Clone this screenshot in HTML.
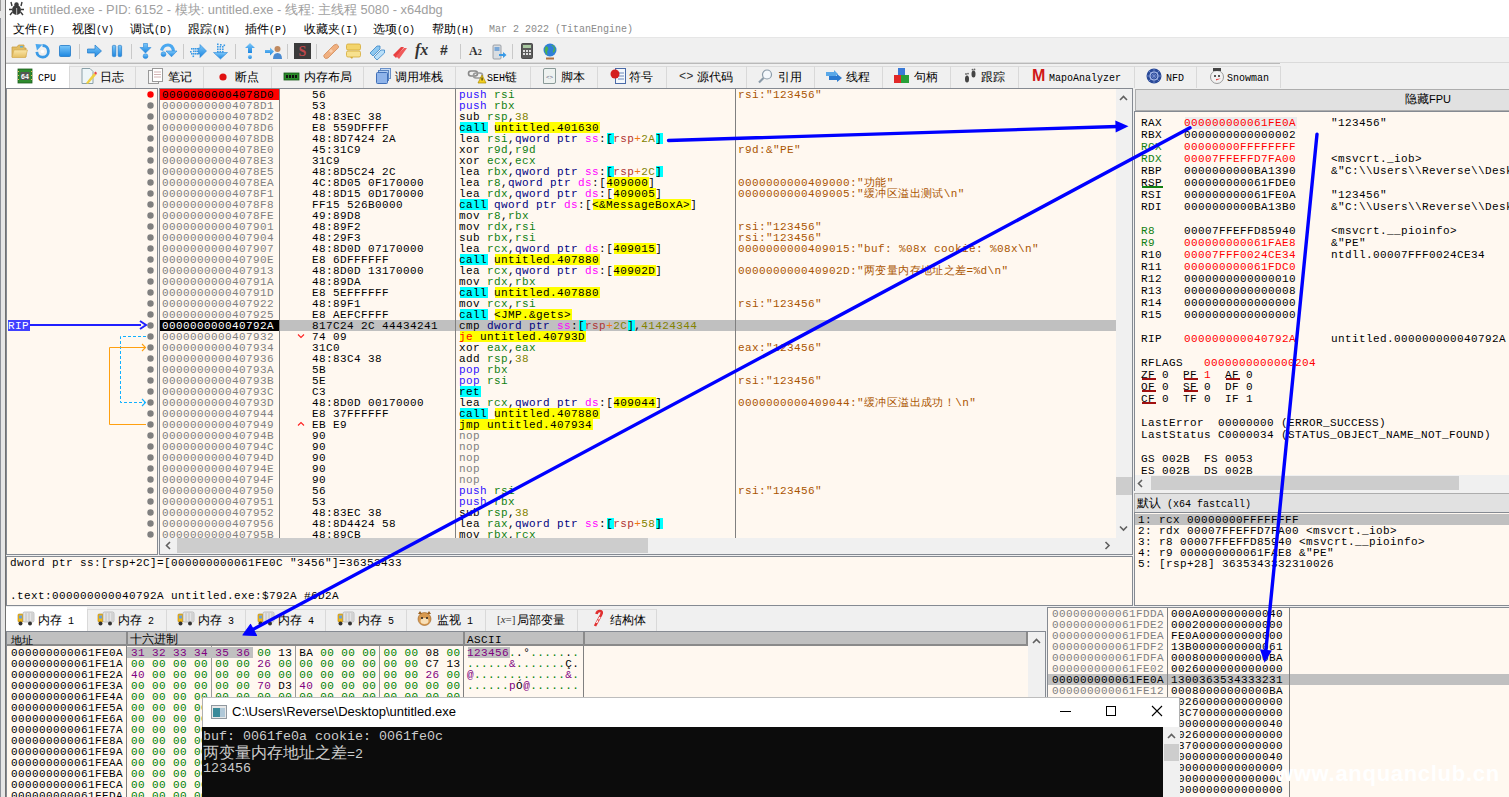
<!DOCTYPE html><html><head><meta charset="utf-8"><style>
html,body{margin:0;padding:0;}
body{width:1509px;height:797px;overflow:hidden;position:relative;background:#f0f0f0;font-family:"Liberation Sans",sans-serif;}
div{position:absolute;box-sizing:border-box;}
.m{font-family:"Liberation Mono",monospace;font-size:11px;letter-spacing:0.4px;line-height:11px;white-space:pre;}
.r{font-family:"Liberation Mono",monospace;font-size:11px;letter-spacing:0.4px;line-height:12px;white-space:pre;}
.s{font-family:"Liberation Sans",sans-serif;font-size:12px;line-height:14px;white-space:pre;color:#000;}
.b{font-family:"Liberation Mono",monospace;font-size:10px;line-height:14px;white-space:pre;color:#000;}
svg{position:absolute;overflow:visible;}
</style></head><body>

<div style="left:0px;top:0px;width:1509px;height:37px;background:#ffffff;"></div>
<div style="left:6px;top:37px;width:1503px;height:1px;background:#e6e6e6;"></div>
<div style="left:6px;top:62px;width:1503px;height:1px;background:#dadada;"></div>
<div style="left:0px;top:0px;width:5px;height:797px;background:#e6e6e6;"></div>
<div style="left:0px;top:0px;width:1px;height:11px;background:#9a9a9a;"></div>
<div style="left:0px;top:18px;width:1px;height:779px;background:#8d9199;"></div>
<div style="left:5px;top:0px;width:1px;height:797px;background:#707070;"></div>
<svg style="left:8px;top:1px" width="17" height="15" viewBox="0 0 17 15"><g fill="#3a3a3a" stroke="#3a3a3a"><ellipse cx="8.5" cy="9" rx="4.5" ry="5" stroke="none"/><circle cx="8.5" cy="3.5" r="2.2" stroke="none"/><path d="M3 1 L4 5 M14 1 L13 5 M1 8.5 L4 8.5 M13 8.5 L16 8.5 M2 14 L4.5 11 M15 14 L12.5 11" stroke-width="1.4" fill="none"/></g><rect x="8" y="7" width="1.2" height="7" fill="#aaa"/></svg>
<div class="s" style="left:29px;top:2px;font-size:12.85px;line-height:16px;color:#a0a0a0">untitled.exe - PID: 6152 - 模块: untitled.exe - 线程: 主线程 5080 - x64dbg</div>
<div class="s" style="left:13px;top:22px;font-size:12px;line-height:14px">文件<span style="font-family:'Liberation Mono';font-size:10px">(F)</span></div>
<div class="s" style="left:72px;top:22px;font-size:12px;line-height:14px">视图<span style="font-family:'Liberation Mono';font-size:10px">(V)</span></div>
<div class="s" style="left:130px;top:22px;font-size:12px;line-height:14px">调试<span style="font-family:'Liberation Mono';font-size:10px">(D)</span></div>
<div class="s" style="left:188px;top:22px;font-size:12px;line-height:14px">跟踪<span style="font-family:'Liberation Mono';font-size:10px">(N)</span></div>
<div class="s" style="left:245px;top:22px;font-size:12px;line-height:14px">插件<span style="font-family:'Liberation Mono';font-size:10px">(P)</span></div>
<div class="s" style="left:304px;top:22px;font-size:12px;line-height:14px">收藏夹<span style="font-family:'Liberation Mono';font-size:10px">(I)</span></div>
<div class="s" style="left:373px;top:22px;font-size:12px;line-height:14px">选项<span style="font-family:'Liberation Mono';font-size:10px">(O)</span></div>
<div class="s" style="left:432px;top:22px;font-size:12px;line-height:14px">帮助<span style="font-family:'Liberation Mono';font-size:10px">(H)</span></div>
<div class="b" style="left:489px;top:23px;color:#8a8a8a">Mar 2 2022 (TitanEngine)</div>
<div style="left:6px;top:63px;width:1503px;height:1px;background:#b9b9b9;"></div>
<div style="left:79px;top:44px;width:1px;height:15px;background:#c9c9c9;"></div>
<div style="left:131px;top:44px;width:1px;height:15px;background:#c9c9c9;"></div>
<div style="left:183px;top:44px;width:1px;height:15px;background:#c9c9c9;"></div>
<div style="left:235px;top:44px;width:1px;height:15px;background:#c9c9c9;"></div>
<div style="left:287px;top:44px;width:1px;height:15px;background:#c9c9c9;"></div>
<div style="left:316px;top:44px;width:1px;height:15px;background:#c9c9c9;"></div>
<div style="left:460px;top:44px;width:1px;height:15px;background:#c9c9c9;"></div>
<div style="left:512px;top:44px;width:1px;height:15px;background:#c9c9c9;"></div>
<svg style="left:0;top:0" width="0" height="0"><defs><linearGradient id="gb" x1="0" y1="0" x2="0" y2="1"><stop offset="0" stop-color="#7cc8fa"/><stop offset="1" stop-color="#1c86e0"/></linearGradient><linearGradient id="gf" x1="0" y1="0" x2="0" y2="1"><stop offset="0" stop-color="#fae6a8"/><stop offset="1" stop-color="#e6bf62"/></linearGradient></defs></svg>
<svg style="left:11px;top:43px" width="17" height="16" viewBox="0 0 17 16"><path d="M1 4 L6 4 L7.5 2 L13 2 L13 5 L15 5 L15 14 L1 14 Z" fill="#e2bd63" stroke="#c9a048" stroke-width="0.8"/><path d="M3 7 L16.5 7 L14.5 14.5 L1 14.5 Z" fill="url(#gf)" stroke="#d4ab50" stroke-width="0.6"/><rect x="9" y="3" width="3" height="1.5" fill="#5ab0e0"/></svg>
<svg style="left:35px;top:43px" width="15" height="16" viewBox="0 0 15 16"><path d="M7.5 2.5 A5.8 5.8 0 1 1 1.8 8.8" fill="none" stroke="#3a9ae6" stroke-width="2.8"/><path d="M0.5 1 L7.5 1.5 L2 7.5 Z" fill="#4aa8f0"/><circle cx="7.5" cy="8.5" r="1.8" fill="#fff"/></svg>
<svg style="left:59px;top:45px" width="12" height="12" viewBox="0 0 12 12"><rect x="0.5" y="0.5" width="11" height="11" rx="1" fill="url(#gb)" stroke="#1f78c8" stroke-width="0.8"/></svg>
<svg style="left:87px;top:44px" width="15" height="14" viewBox="0 0 15 14"><path d="M0.5 5 L8 5 L8 1 L14.5 7 L8 13 L8 9 L0.5 9 Z" fill="url(#gb)" stroke="#1f78c8" stroke-width="0.7" stroke-linejoin="round"/></svg>
<svg style="left:112px;top:45px" width="10" height="12" viewBox="0 0 10 12"><rect x="0.4" y="0.4" width="3.4" height="11.2" rx="1" fill="url(#gb)" stroke="#1f78c8" stroke-width="0.7"/><rect x="6.2" y="0.4" width="3.4" height="11.2" rx="1" fill="url(#gb)" stroke="#1f78c8" stroke-width="0.7"/></svg>
<svg style="left:139px;top:43px" width="13" height="16" viewBox="0 0 13 16"><path d="M4.5 0.5 L8.5 0.5 L8.5 4.5 L12 4.5 L6.5 10 L1 4.5 L4.5 4.5 Z" fill="url(#gb)" stroke="#2a86d8" stroke-width="0.6"/><circle cx="6.5" cy="13.2" r="2.4" fill="url(#gb)" stroke="#2a86d8" stroke-width="0.6"/></svg>
<svg style="left:159px;top:43px" width="19" height="16" viewBox="0 0 19 16"><path d="M2.5 7.5 Q4 2 9 2 Q13.5 2 14.5 8" fill="none" stroke="#4aa8f0" stroke-width="3.2"/><path d="M7 8 L18 8 L12.5 13.8 Z" fill="url(#gb)" stroke="#2a86d8" stroke-width="0.6"/><circle cx="4.5" cy="11.2" r="2.4" fill="url(#gb)" stroke="#2a86d8" stroke-width="0.6"/></svg>
<svg style="left:190px;top:44px" width="17" height="15" viewBox="0 0 17 15"><g fill="#3a9ae6"><rect x="1" y="4" width="1.6" height="1.6"/><rect x="3" y="4" width="1.6" height="1.6"/><rect x="5" y="4" width="1.6" height="1.6"/><rect x="7" y="4" width="1.6" height="1.6"/><rect x="3" y="6.5" width="1.6" height="1.6"/><rect x="5" y="6.5" width="1.6" height="1.6"/><rect x="7" y="6.5" width="1.6" height="1.6"/><rect x="1" y="9" width="1.6" height="1.6"/><rect x="3" y="9" width="1.6" height="1.6"/><rect x="5" y="9" width="1.6" height="1.6"/><rect x="7" y="9" width="1.6" height="1.6"/><rect x="0" y="7" width="1.6" height="1.6"/><rect x="2.5" y="11.5" width="1.6" height="1.6"/></g><path d="M8.5 4 L10 4 L10 0.5 L16.5 7 L10 13.5 L10 10 L8.5 10 Z" fill="url(#gb)" stroke="#2a86d8" stroke-width="0.6"/></svg>
<svg style="left:213px;top:43px" width="15" height="17" viewBox="0 0 15 17"><g fill="#3a9ae6"><rect x="4" y="0.5" width="1.6" height="1.6"/><rect x="7" y="1" width="1.6" height="1.6"/><rect x="4" y="3" width="1.6" height="1.6"/><rect x="6.5" y="3" width="1.6" height="1.6"/><rect x="9" y="3" width="1.6" height="1.6"/><rect x="4" y="5.5" width="1.6" height="1.6"/><rect x="6.5" y="5.5" width="1.6" height="1.6"/><rect x="9" y="5.5" width="1.6" height="1.6"/><rect x="4" y="8" width="1.6" height="1.6"/><rect x="6.5" y="8" width="1.6" height="1.6"/><rect x="9" y="8" width="1.6" height="1.6"/><rect x="10.5" y="1.5" width="1.6" height="1.6"/></g><path d="M3.5 9.5 L11 9.5 L14.5 9.5 L7.5 16 L0.5 9.5 Z" fill="url(#gb)" stroke="#2a86d8" stroke-width="0.6"/></svg>
<svg style="left:244px;top:43px" width="12" height="16" viewBox="0 0 12 16"><path d="M6 0 L11 5 L8 5 L8 10 L4 10 L4 5 L1 5 Z" fill="url(#gb)"/><circle cx="6" cy="14" r="2" fill="url(#gb)"/></svg>
<svg style="left:265px;top:44px" width="17" height="15" viewBox="0 0 17 15"><path d="M0 6 L5 6 L5 3.5 L9 7.5 L5 11.5 L5 9 L0 9 Z" fill="url(#gb)"/><circle cx="12.5" cy="5" r="3" fill="#c08a60"/><path d="M8 15 Q8 9 12.5 9 Q17 9 17 15 Z" fill="#4a8ad0"/></svg>
<svg style="left:294px;top:43px" width="17" height="16" viewBox="0 0 17 16"><rect x="0" y="0" width="17" height="16" fill="#3b3b3b"/><text x="8.5" y="13" font-family="Liberation Serif" font-weight="bold" font-size="14" fill="#c0484c" text-anchor="middle">S</text></svg>
<svg style="left:323px;top:43px" width="16" height="16" viewBox="0 0 16 16"><path d="M2 11 L11 2 Q14 0 15.5 3 Q16 5 14 6 L5 15 Q2 16.5 1 14 Q0 12.5 2 11 Z" fill="#f0b080" stroke="#d08a58" stroke-width="0.8"/><rect x="6.5" y="6.5" width="3" height="3" fill="#f8d0b0" transform="rotate(45 8 8)"/></svg>
<svg style="left:346px;top:43px" width="15" height="16" viewBox="0 0 15 16"><rect x="0.5" y="1" width="14" height="6" rx="1.5" fill="#f3d46b" stroke="#d4a935" stroke-width="0.8"/><rect x="0.5" y="8" width="14" height="6" rx="1.5" fill="#f7e190" stroke="#d4a935" stroke-width="0.8"/><path d="M4 14 L6 16 L7 14 Z" fill="#d4a935"/></svg>
<svg style="left:369px;top:44px" width="17" height="15" viewBox="0 0 17 15"><path d="M1 9 L8 2 L11 2 L11 5 L4 12 Z" fill="#8ec8f0" stroke="#3a86c8" stroke-width="0.8"/><path d="M5 13 L12 6 L15.5 6 L15.5 9 L8 16 Z" fill="#b8def8" stroke="#3a86c8" stroke-width="0.8"/></svg>
<svg style="left:392px;top:44px" width="16" height="15" viewBox="0 0 16 15"><path d="M1 11 L9 3 L12 3 L4 14 Z" fill="#e84040"/><path d="M4 12 L12 4 L15 4 L7 15 Z" fill="#f05a5a"/></svg>
<div style="left:415px;top:40px;font-family:'Liberation Serif';font-style:italic;font-weight:bold;font-size:16px;line-height:20px;color:#333">fx</div>
<div style="left:440px;top:41px;font-family:'Liberation Sans';font-weight:bold;font-size:14px;line-height:18px;color:#333">#</div>
<div style="left:469px;top:43px;font-family:'Liberation Serif';font-weight:bold;font-size:12px;line-height:16px;color:#333">A<span style="font-size:8px">2</span></div>
<svg style="left:492px;top:43px" width="15" height="17" viewBox="0 0 15 17"><rect x="1" y="2" width="8" height="14" rx="1" fill="#d8dde2" stroke="#8a9098" stroke-width="0.8"/><rect x="2.5" y="4" width="5" height="4" fill="#7aa8d8"/><path d="M7 11 L11 11 L11 9 L14.5 12 L11 15 L11 13 L7 13 Z" fill="#3a9ae6"/></svg>
<svg style="left:521px;top:43px" width="12" height="16" viewBox="0 0 12 16"><rect x="0.5" y="0.5" width="11" height="15" rx="1" fill="#5a5a5a" stroke="#333" stroke-width="0.8"/><rect x="2" y="2" width="8" height="3" fill="#a8c8a0"/><g fill="#ddd"><rect x="2" y="7" width="2" height="2"/><rect x="5" y="7" width="2" height="2"/><rect x="8" y="7" width="2" height="2"/><rect x="2" y="10" width="2" height="2"/><rect x="5" y="10" width="2" height="2"/><rect x="8" y="10" width="2" height="2"/></g></svg>
<svg style="left:542px;top:43px" width="16" height="17" viewBox="0 0 16 17"><circle cx="8" cy="7" r="6.5" fill="#2f7fd8"/><path d="M4 3 Q7 4 6 7 Q4 9 6 12 L4 11 Q2 8 3 5 Z M9 2 Q12 3 12 6 Q10 8 11 10 L13 8 Q14 4 11 2 Z" fill="#4cb050"/><path d="M4 15.5 L12 15.5" stroke="#b07040" stroke-width="2"/></svg>
<div style="left:1280px;top:63px;width:229px;height:25px;background:#f0f0f0;"></div>
<div style="left:6px;top:64px;width:63px;height:24px;background:#ffffff;"></div>
<div style="left:69px;top:66px;width:66px;height:1px;background:#dcdcdc;"></div>
<div style="left:69px;top:67px;width:66px;height:21px;background:#f0f0f0;"></div>
<div style="left:69px;top:66px;width:1px;height:22px;background:#d9d9d9;"></div>
<div style="left:135px;top:66px;width:68px;height:1px;background:#dcdcdc;"></div>
<div style="left:135px;top:67px;width:68px;height:21px;background:#f0f0f0;"></div>
<div style="left:135px;top:66px;width:1px;height:22px;background:#d9d9d9;"></div>
<div style="left:203px;top:66px;width:68px;height:1px;background:#dcdcdc;"></div>
<div style="left:203px;top:67px;width:68px;height:21px;background:#f0f0f0;"></div>
<div style="left:203px;top:66px;width:1px;height:22px;background:#d9d9d9;"></div>
<div style="left:271px;top:66px;width:92px;height:1px;background:#dcdcdc;"></div>
<div style="left:271px;top:67px;width:92px;height:21px;background:#f0f0f0;"></div>
<div style="left:271px;top:66px;width:1px;height:22px;background:#d9d9d9;"></div>
<div style="left:363px;top:66px;width:92px;height:1px;background:#dcdcdc;"></div>
<div style="left:363px;top:67px;width:92px;height:21px;background:#f0f0f0;"></div>
<div style="left:363px;top:66px;width:1px;height:22px;background:#d9d9d9;"></div>
<div style="left:455px;top:66px;width:75px;height:1px;background:#dcdcdc;"></div>
<div style="left:455px;top:67px;width:75px;height:21px;background:#f0f0f0;"></div>
<div style="left:455px;top:66px;width:1px;height:22px;background:#d9d9d9;"></div>
<div style="left:530px;top:66px;width:67px;height:1px;background:#dcdcdc;"></div>
<div style="left:530px;top:67px;width:67px;height:21px;background:#f0f0f0;"></div>
<div style="left:530px;top:66px;width:1px;height:22px;background:#d9d9d9;"></div>
<div style="left:597px;top:66px;width:69px;height:1px;background:#dcdcdc;"></div>
<div style="left:597px;top:67px;width:69px;height:21px;background:#f0f0f0;"></div>
<div style="left:597px;top:66px;width:1px;height:22px;background:#d9d9d9;"></div>
<div style="left:666px;top:66px;width:80px;height:1px;background:#dcdcdc;"></div>
<div style="left:666px;top:67px;width:80px;height:21px;background:#f0f0f0;"></div>
<div style="left:666px;top:66px;width:1px;height:22px;background:#d9d9d9;"></div>
<div style="left:746px;top:66px;width:68px;height:1px;background:#dcdcdc;"></div>
<div style="left:746px;top:67px;width:68px;height:21px;background:#f0f0f0;"></div>
<div style="left:746px;top:66px;width:1px;height:22px;background:#d9d9d9;"></div>
<div style="left:814px;top:66px;width:68px;height:1px;background:#dcdcdc;"></div>
<div style="left:814px;top:67px;width:68px;height:21px;background:#f0f0f0;"></div>
<div style="left:814px;top:66px;width:1px;height:22px;background:#d9d9d9;"></div>
<div style="left:882px;top:66px;width:68px;height:1px;background:#dcdcdc;"></div>
<div style="left:882px;top:67px;width:68px;height:21px;background:#f0f0f0;"></div>
<div style="left:882px;top:66px;width:1px;height:22px;background:#d9d9d9;"></div>
<div style="left:950px;top:66px;width:68px;height:1px;background:#dcdcdc;"></div>
<div style="left:950px;top:67px;width:68px;height:21px;background:#f0f0f0;"></div>
<div style="left:950px;top:66px;width:1px;height:22px;background:#d9d9d9;"></div>
<div style="left:1018px;top:66px;width:116px;height:1px;background:#dcdcdc;"></div>
<div style="left:1018px;top:67px;width:116px;height:21px;background:#f0f0f0;"></div>
<div style="left:1018px;top:66px;width:1px;height:22px;background:#d9d9d9;"></div>
<div style="left:1134px;top:66px;width:62px;height:1px;background:#dcdcdc;"></div>
<div style="left:1134px;top:67px;width:62px;height:21px;background:#f0f0f0;"></div>
<div style="left:1134px;top:66px;width:1px;height:22px;background:#d9d9d9;"></div>
<div style="left:1196px;top:66px;width:84px;height:1px;background:#dcdcdc;"></div>
<div style="left:1196px;top:67px;width:84px;height:21px;background:#f0f0f0;"></div>
<div style="left:1196px;top:66px;width:1px;height:22px;background:#d9d9d9;"></div>
<div style="left:1280px;top:66px;width:1px;height:22px;background:#d9d9d9;"></div>
<svg style="left:18px;top:69px" width="14" height="14" viewBox="0 0 14 14"><rect x="0" y="0" width="14" height="14" fill="#2e8b2e" stroke="#1c5e1c" stroke-width="0.8"/><rect x="2.5" y="3" width="9" height="8" fill="#555"/><text x="7" y="10" font-size="7" font-family="Liberation Sans" font-weight="bold" fill="#fff" text-anchor="middle">64</text><g fill="#e8c050"><rect x="0" y="2" width="1" height="1"/><rect x="0" y="6" width="1" height="1"/><rect x="0" y="10" width="1" height="1"/><rect x="13" y="2" width="1" height="1"/><rect x="13" y="6" width="1" height="1"/><rect x="13" y="10" width="1" height="1"/></g></svg>
<div class="s" style="left:38px;top:70px"><span style="font-family:'Liberation Mono';font-size:10px">CPU</span></div>
<svg style="left:81px;top:68px" width="16" height="16" viewBox="0 0 16 16"><path d="M1 0.5 L9 0.5 L12 3.5 L12 15.5 L1 15.5 Z" fill="#eef6f8" stroke="#8aa0a8"/><path d="M5 15 L13 5 L15 7 L7 16 Z" fill="#f0d040"/><path d="M13 5 L14.5 3.5 L16 5 L15 7Z" fill="#e84848"/></svg>
<div class="s" style="left:100px;top:70px">日志</div>
<svg style="left:148px;top:68px" width="15" height="16" viewBox="0 0 15 16"><rect x="0.5" y="2.5" width="10" height="13" fill="#f6f6f6" stroke="#999"/><rect x="4.5" y="0.5" width="10" height="13" fill="#fff" stroke="#999"/><g stroke="#c8a0a0" stroke-width="0.8"><path d="M6 4 L13 4 M6 6.5 L13 6.5 M6 9 L13 9"/></g></svg>
<div class="s" style="left:168px;top:70px">笔记</div>
<svg style="left:219px;top:73px" width="8" height="8" viewBox="0 0 8 8"><circle cx="4" cy="4" r="3.6" fill="#e01010"/></svg>
<div class="s" style="left:235px;top:70px">断点</div>
<svg style="left:284px;top:73px" width="15" height="8" viewBox="0 0 15 8"><rect x="0" y="0" width="15" height="7" fill="#2a8a2a" stroke="#145814" stroke-width="0.8"/><g fill="#111"><rect x="2" y="2" width="2" height="3"/><rect x="5" y="2" width="2" height="3"/><rect x="8" y="2" width="2" height="3"/><rect x="11" y="2" width="2" height="3"/></g></svg>
<div class="s" style="left:304px;top:70px">内存布局</div>
<svg style="left:376px;top:68px" width="15" height="16" viewBox="0 0 15 16"><rect x="4.5" y="0.5" width="10" height="10" fill="#c8dcf4" stroke="#6a90c8"/><rect x="2.5" y="2.5" width="10" height="10" fill="#b0ccf0" stroke="#5a84c0"/><rect x="0.5" y="4.5" width="11" height="11" rx="1" fill="#8fb4ea" stroke="#3f6fb8"/></svg>
<div class="s" style="left:395px;top:70px">调用堆栈</div>
<svg style="left:468px;top:69px" width="19" height="14" viewBox="0 0 19 14"><rect x="0.5" y="2" width="9" height="5" rx="2.5" fill="none" stroke="#888" stroke-width="1.6"/><rect x="5.5" y="4" width="9" height="5" rx="2.5" fill="none" stroke="#999" stroke-width="1.6"/><path d="M10 14 L14 6 L18 14 Z" fill="#f5d020" stroke="#a88a00" stroke-width="0.7"/><rect x="13.6" y="8.5" width="0.9" height="3" fill="#000"/></svg>
<div class="s" style="left:487px;top:70px"><span style="font-family:'Liberation Mono';font-size:10px">SEH</span>链</div>
<svg style="left:543px;top:68px" width="13" height="16" viewBox="0 0 13 16"><path d="M2 0.5 L12.5 0.5 L12.5 14 Q12.5 15.5 11 15.5 L0.5 15.5 L0.5 2 Q0.5 0.5 2 0.5 Z" fill="#eef2f0" stroke="#8a9a98"/><text x="6.5" y="11" font-size="6" font-family="Liberation Mono" fill="#557" text-anchor="middle">&lt;&gt;</text></svg>
<div class="s" style="left:561px;top:70px">脚本</div>
<svg style="left:610px;top:68px" width="16" height="16" viewBox="0 0 16 16"><rect x="5.5" y="0.5" width="10" height="15" fill="#f4f8fc" stroke="#4a6aa8"/><g stroke="#4a6aa8" stroke-width="0.8"><path d="M8 5 L14 5 M8 8 L14 8 M8 11 L14 11"/></g><circle cx="5" cy="6" r="4.5" fill="#d42020"/></svg>
<div class="s" style="left:629px;top:70px">符号</div>
<div class="b" style="left:679px;top:69px;font-size:12px;line-height:16px;color:#333">&lt;&gt;</div>
<div class="s" style="left:697px;top:70px">源代码</div>
<svg style="left:758px;top:69px" width="15" height="15" viewBox="0 0 15 15"><circle cx="9" cy="5.5" r="4.5" fill="#f4f8fc" stroke="#8a9aa8" stroke-width="1.2"/><path d="M5.5 9 L1 13.5" stroke="#8a9aa8" stroke-width="2.2"/></svg>
<div class="s" style="left:778px;top:70px">引用</div>
<svg style="left:826px;top:70px" width="17" height="12" viewBox="0 0 17 12"><path d="M0 2 L8 2 L8 0 L12 4 L8 8 L8 6 L0 6 Z" fill="#5aa8e8"/><path d="M3 6 L11 6 L11 4 L16 8 L11 12 L11 10 L3 10 Z" fill="#2a7ad0"/></svg>
<div class="s" style="left:846px;top:70px">线程</div>
<svg style="left:894px;top:68px" width="15" height="16" viewBox="0 0 15 16"><rect x="4" y="0" width="7" height="7" fill="#3a7ad8"/><rect x="0" y="7" width="7" height="8" fill="#e02828"/><rect x="7" y="7" width="8" height="8" fill="#28a038"/></svg>
<div class="s" style="left:914px;top:70px">句柄</div>
<svg style="left:964px;top:69px" width="13" height="15" viewBox="0 0 13 15"><ellipse cx="3" cy="10" rx="2" ry="3.5" fill="#444"/><ellipse cx="9.5" cy="5" rx="2" ry="3.5" fill="#444"/><g fill="#666"><circle cx="2" cy="5" r="0.9"/><circle cx="4" cy="4.6" r="0.9"/><circle cx="8.5" cy="0.6" r="0.9"/><circle cx="10.5" cy="0.4" r="0.9"/></g></svg>
<div class="s" style="left:981px;top:70px">跟踪</div>
<div style="left:1032px;top:66px;font-family:'Liberation Sans';font-weight:bold;font-size:16px;line-height:20px;color:#d01818">M</div>
<div class="s" style="left:1049px;top:70px"><span style="font-family:'Liberation Mono';font-size:10px">MapoAnalyzer</span></div>
<svg style="left:1146px;top:68px" width="16" height="16" viewBox="0 0 16 16"><circle cx="8" cy="8" r="7.5" fill="#2a4a98"/><circle cx="8" cy="8" r="4" fill="none" stroke="#b8c8f0" stroke-width="1.2"/><path d="M8 1 L8 15 M1 8 L15 8 M3 3 L13 13 M13 3 L3 13" stroke="#7890d0" stroke-width="0.8"/></svg>
<div class="s" style="left:1166px;top:70px"><span style="font-family:'Liberation Mono';font-size:10px">NFD</span></div>
<svg style="left:1209px;top:68px" width="16" height="16" viewBox="0 0 16 16"><circle cx="8" cy="9" r="6.5" fill="#f2f2f2" stroke="#9a9a9a"/><circle cx="6" cy="8" r="1" fill="#222"/><circle cx="10" cy="8" r="1" fill="#222"/><path d="M7 11 L12 10.5 L7 12.5Z" fill="#e04040"/><rect x="4" y="0" width="8" height="3" fill="#444"/></svg>
<div class="s" style="left:1227px;top:70px"><span style="font-family:'Liberation Mono';font-size:10px">Snowman</span></div>
<div style="left:6px;top:88px;width:152px;height:467px;background:#858a92;"></div>
<div style="left:7px;top:89px;width:150px;height:465px;background:#fff8f0;"></div>
<div style="left:159px;top:88px;width:974px;height:467px;background:#858a92;"></div>
<div style="left:160px;top:89px;width:972px;height:465px;background:#fff8f0;"></div>
<div style="left:158px;top:88px;width:1px;height:467px;background:#f0f0f0;"></div>
<div style="left:1116px;top:89px;width:16px;height:449px;background:#f0f0f0;"></div>
<div style="left:1116px;top:477px;width:16px;height:18px;background:#cdcdcd;"></div>
<div style="left:160px;top:538px;width:956px;height:16px;background:#f0f0f0;"></div>
<div style="left:177px;top:538px;width:471px;height:15px;background:#cdcdcd;"></div>
<div style="left:1116px;top:538px;width:16px;height:16px;background:#f0f0f0;"></div>
<svg style="left:1119px;top:95px" width="9" height="9" viewBox="0 0 9 9"><path d="M1 5 L4.5 1.5 L8 5" fill="none" stroke="#606060" stroke-width="1.6"/></svg>
<svg style="left:1119px;top:525px" width="9" height="9" viewBox="0 0 9 9"><path d="M1 1.5 L4.5 5 L8 1.5" fill="none" stroke="#606060" stroke-width="1.6"/></svg>
<svg style="left:165px;top:541px" width="9" height="9" viewBox="0 0 9 9"><path d="M5 1 L1.5 4.5 L5 8" fill="none" stroke="#606060" stroke-width="1.6"/></svg>
<svg style="left:1104px;top:541px" width="9" height="9" viewBox="0 0 9 9"><path d="M1.5 1 L5 4.5 L1.5 8" fill="none" stroke="#606060" stroke-width="1.6"/></svg>
<div style="left:160px;top:89px;width:956px;height:449px;overflow:hidden">
<div style="left:0px;top:0px;width:119px;height:11px;background:#ff0000;"></div>
<div class="m" style="left:2px;top:1px;"><span style="color:#000000">00000000004078D0</span></div>
<div class="m" style="left:152px;top:1px;"><span style="color:#000">56</span></div>
<div class="m" style="left:299px;top:1px;"><span style="color:#3010ff">push</span> <span style="color:#108010">rsi</span></div>
<div class="m" style="left:578px;top:1px;"><span style="color:#aa5500">rsi:"123456"</span></div>
<div class="m" style="left:2px;top:12px;"><span style="color:#808080">00000000004078D1</span></div>
<div class="m" style="left:152px;top:12px;"><span style="color:#000">53</span></div>
<div class="m" style="left:299px;top:12px;"><span style="color:#3010ff">push</span> <span style="color:#108010">rbx</span></div>
<div class="m" style="left:2px;top:23px;"><span style="color:#808080">00000000004078D2</span></div>
<div class="m" style="left:152px;top:23px;"><span style="color:#000">48:83EC 38</span></div>
<div class="m" style="left:299px;top:23px;"><span style="color:#000">sub</span> <span style="color:#108010">rsp</span><span style="color:#000">,</span><span style="color:#828200">38</span></div>
<div class="m" style="left:2px;top:34px;"><span style="color:#808080">00000000004078D6</span></div>
<div class="m" style="left:152px;top:34px;"><span style="color:#000">E8 559DFFFF</span></div>
<div style="left:300px;top:33px;width:28px;height:11px;background:#00ffff;"></div>
<div style="left:335px;top:33px;width:105px;height:11px;background:#ffff00;"></div>
<div class="m" style="left:299px;top:34px;"><span style="color:#000">call</span> <span style="color:#000">untitled.401630</span></div>
<div class="m" style="left:2px;top:45px;"><span style="color:#808080">00000000004078DB</span></div>
<div class="m" style="left:152px;top:45px;"><span style="color:#000">48:8D7424 2A</span></div>
<div style="left:447px;top:44px;width:7px;height:11px;background:#00ffff;"></div>
<div style="left:496px;top:44px;width:7px;height:11px;background:#00ffff;"></div>
<div class="m" style="left:299px;top:45px;"><span style="color:#000">lea</span> <span style="color:#108010">rsi</span><span style="color:#000">,</span><span style="color:#000080">qword ptr</span> <span style="color:#ff00ff">ss</span><span style="color:#000">:</span><span style="color:#000">[</span><span style="color:#b03434">rsp</span><span style="color:#f27711">+</span><span style="color:#828200">2A</span><span style="color:#000">]</span></div>
<div class="m" style="left:2px;top:56px;"><span style="color:#808080">00000000004078E0</span></div>
<div class="m" style="left:152px;top:56px;"><span style="color:#000">45:31C9</span></div>
<div class="m" style="left:299px;top:56px;"><span style="color:#000">xor</span> <span style="color:#108010">r9d</span><span style="color:#000">,</span><span style="color:#108010">r9d</span></div>
<div class="m" style="left:578px;top:56px;"><span style="color:#aa5500">r9d:&amp;"PE"</span></div>
<div class="m" style="left:2px;top:67px;"><span style="color:#808080">00000000004078E3</span></div>
<div class="m" style="left:152px;top:67px;"><span style="color:#000">31C9</span></div>
<div class="m" style="left:299px;top:67px;"><span style="color:#000">xor</span> <span style="color:#108010">ecx</span><span style="color:#000">,</span><span style="color:#108010">ecx</span></div>
<div class="m" style="left:2px;top:78px;"><span style="color:#808080">00000000004078E5</span></div>
<div class="m" style="left:152px;top:78px;"><span style="color:#000">48:8D5C24 2C</span></div>
<div style="left:447px;top:77px;width:7px;height:11px;background:#00ffff;"></div>
<div style="left:496px;top:77px;width:7px;height:11px;background:#00ffff;"></div>
<div class="m" style="left:299px;top:78px;"><span style="color:#000">lea</span> <span style="color:#108010">rbx</span><span style="color:#000">,</span><span style="color:#000080">qword ptr</span> <span style="color:#ff00ff">ss</span><span style="color:#000">:</span><span style="color:#000">[</span><span style="color:#b03434">rsp</span><span style="color:#f27711">+</span><span style="color:#828200">2C</span><span style="color:#000">]</span></div>
<div class="m" style="left:2px;top:89px;"><span style="color:#808080">00000000004078EA</span></div>
<div class="m" style="left:152px;top:89px;"><span style="color:#000">4C:8D05 0F170000</span></div>
<div style="left:447px;top:88px;width:42px;height:11px;background:#ffff00;"></div>
<div class="m" style="left:299px;top:89px;"><span style="color:#000">lea</span> <span style="color:#108010">r8</span><span style="color:#000">,</span><span style="color:#000080">qword ptr</span> <span style="color:#ff00ff">ds</span><span style="color:#000">:</span><span style="color:#000">[</span><span style="color:#000">409000</span><span style="color:#000">]</span></div>
<div class="m" style="left:578px;top:89px;"><span style="color:#aa5500">0000000000409000:"功能"</span></div>
<div class="m" style="left:2px;top:100px;"><span style="color:#808080">00000000004078F1</span></div>
<div class="m" style="left:152px;top:100px;"><span style="color:#000">48:8D15 0D170000</span></div>
<div style="left:454px;top:99px;width:42px;height:11px;background:#ffff00;"></div>
<div class="m" style="left:299px;top:100px;"><span style="color:#000">lea</span> <span style="color:#108010">rdx</span><span style="color:#000">,</span><span style="color:#000080">qword ptr</span> <span style="color:#ff00ff">ds</span><span style="color:#000">:</span><span style="color:#000">[</span><span style="color:#000">409005</span><span style="color:#000">]</span></div>
<div class="m" style="left:578px;top:100px;"><span style="color:#aa5500">0000000000409005:"缓冲区溢出测试\n"</span></div>
<div class="m" style="left:2px;top:111px;"><span style="color:#808080">00000000004078F8</span></div>
<div class="m" style="left:152px;top:111px;"><span style="color:#000">FF15 526B0000</span></div>
<div style="left:300px;top:110px;width:28px;height:11px;background:#00ffff;"></div>
<div style="left:433px;top:110px;width:98px;height:11px;background:#ffff00;"></div>
<div class="m" style="left:299px;top:111px;"><span style="color:#000">call</span> <span style="color:#000080">qword ptr</span> <span style="color:#ff00ff">ds</span><span style="color:#000">:</span><span style="color:#000">[</span><span style="color:#000">&lt;&amp;MessageBoxA&gt;</span><span style="color:#000">]</span></div>
<div class="m" style="left:2px;top:122px;"><span style="color:#808080">00000000004078FE</span></div>
<div class="m" style="left:152px;top:122px;"><span style="color:#000">49:89D8</span></div>
<div class="m" style="left:299px;top:122px;"><span style="color:#000">mov</span> <span style="color:#108010">r8</span><span style="color:#000">,</span><span style="color:#108010">rbx</span></div>
<div class="m" style="left:2px;top:133px;"><span style="color:#808080">0000000000407901</span></div>
<div class="m" style="left:152px;top:133px;"><span style="color:#000">48:89F2</span></div>
<div class="m" style="left:299px;top:133px;"><span style="color:#000">mov</span> <span style="color:#108010">rdx</span><span style="color:#000">,</span><span style="color:#108010">rsi</span></div>
<div class="m" style="left:578px;top:133px;"><span style="color:#aa5500">rsi:"123456"</span></div>
<div class="m" style="left:2px;top:144px;"><span style="color:#808080">0000000000407904</span></div>
<div class="m" style="left:152px;top:144px;"><span style="color:#000">48:29F3</span></div>
<div class="m" style="left:299px;top:144px;"><span style="color:#000">sub</span> <span style="color:#108010">rbx</span><span style="color:#000">,</span><span style="color:#108010">rsi</span></div>
<div class="m" style="left:578px;top:144px;"><span style="color:#aa5500">rsi:"123456"</span></div>
<div class="m" style="left:2px;top:155px;"><span style="color:#808080">0000000000407907</span></div>
<div class="m" style="left:152px;top:155px;"><span style="color:#000">48:8D0D 07170000</span></div>
<div style="left:454px;top:154px;width:42px;height:11px;background:#ffff00;"></div>
<div class="m" style="left:299px;top:155px;"><span style="color:#000">lea</span> <span style="color:#108010">rcx</span><span style="color:#000">,</span><span style="color:#000080">qword ptr</span> <span style="color:#ff00ff">ds</span><span style="color:#000">:</span><span style="color:#000">[</span><span style="color:#000">409015</span><span style="color:#000">]</span></div>
<div class="m" style="left:578px;top:155px;"><span style="color:#aa5500">0000000000409015:"buf: %08x cookie: %08x\n"</span></div>
<div class="m" style="left:2px;top:166px;"><span style="color:#808080">000000000040790E</span></div>
<div class="m" style="left:152px;top:166px;"><span style="color:#000">E8 6DFFFFFF</span></div>
<div style="left:300px;top:165px;width:28px;height:11px;background:#00ffff;"></div>
<div style="left:335px;top:165px;width:105px;height:11px;background:#ffff00;"></div>
<div class="m" style="left:299px;top:166px;"><span style="color:#000">call</span> <span style="color:#000">untitled.407880</span></div>
<div class="m" style="left:2px;top:177px;"><span style="color:#808080">0000000000407913</span></div>
<div class="m" style="left:152px;top:177px;"><span style="color:#000">48:8D0D 13170000</span></div>
<div style="left:454px;top:176px;width:42px;height:11px;background:#ffff00;"></div>
<div class="m" style="left:299px;top:177px;"><span style="color:#000">lea</span> <span style="color:#108010">rcx</span><span style="color:#000">,</span><span style="color:#000080">qword ptr</span> <span style="color:#ff00ff">ds</span><span style="color:#000">:</span><span style="color:#000">[</span><span style="color:#000">40902D</span><span style="color:#000">]</span></div>
<div class="m" style="left:578px;top:177px;"><span style="color:#aa5500">000000000040902D:"两变量内存地址之差=%d\n"</span></div>
<div class="m" style="left:2px;top:188px;"><span style="color:#808080">000000000040791A</span></div>
<div class="m" style="left:152px;top:188px;"><span style="color:#000">48:89DA</span></div>
<div class="m" style="left:299px;top:188px;"><span style="color:#000">mov</span> <span style="color:#108010">rdx</span><span style="color:#000">,</span><span style="color:#108010">rbx</span></div>
<div class="m" style="left:2px;top:199px;"><span style="color:#808080">000000000040791D</span></div>
<div class="m" style="left:152px;top:199px;"><span style="color:#000">E8 5EFFFFFF</span></div>
<div style="left:300px;top:198px;width:28px;height:11px;background:#00ffff;"></div>
<div style="left:335px;top:198px;width:105px;height:11px;background:#ffff00;"></div>
<div class="m" style="left:299px;top:199px;"><span style="color:#000">call</span> <span style="color:#000">untitled.407880</span></div>
<div class="m" style="left:2px;top:210px;"><span style="color:#808080">0000000000407922</span></div>
<div class="m" style="left:152px;top:210px;"><span style="color:#000">48:89F1</span></div>
<div class="m" style="left:299px;top:210px;"><span style="color:#000">mov</span> <span style="color:#108010">rcx</span><span style="color:#000">,</span><span style="color:#108010">rsi</span></div>
<div class="m" style="left:578px;top:210px;"><span style="color:#aa5500">rsi:"123456"</span></div>
<div class="m" style="left:2px;top:221px;"><span style="color:#808080">0000000000407925</span></div>
<div class="m" style="left:152px;top:221px;"><span style="color:#000">E8 AEFCFFFF</span></div>
<div style="left:300px;top:220px;width:28px;height:11px;background:#00ffff;"></div>
<div style="left:335px;top:220px;width:77px;height:11px;background:#ffff00;"></div>
<div class="m" style="left:299px;top:221px;"><span style="color:#000">call</span> <span style="color:#000">&lt;JMP.&amp;gets&gt;</span></div>
<div style="left:119px;top:231px;width:837px;height:11px;background:#c0c0c0;"></div>
<div style="left:0px;top:231px;width:119px;height:11px;background:#000000;"></div>
<div class="m" style="left:2px;top:232px;"><span style="color:#ffffff">000000000040792A</span></div>
<div class="m" style="left:152px;top:232px;"><span style="color:#000">817C24 2C 44434241</span></div>
<div style="left:419px;top:231px;width:7px;height:11px;background:#00ffff;"></div>
<div style="left:468px;top:231px;width:7px;height:11px;background:#00ffff;"></div>
<div class="m" style="left:299px;top:232px;"><span style="color:#000">cmp</span> <span style="color:#000080">dword ptr</span> <span style="color:#ff00ff">ss</span><span style="color:#000">:</span><span style="color:#000">[</span><span style="color:#b03434">rsp</span><span style="color:#f27711">+</span><span style="color:#828200">2C</span><span style="color:#000">]</span><span style="color:#000">,</span><span style="color:#828200">41424344</span></div>
<div class="m" style="left:2px;top:243px;"><span style="color:#808080">0000000000407932</span></div>
<div class="m" style="left:152px;top:243px;"><span style="color:#000">74 09</span></div>
<div style="left:300px;top:242px;width:14px;height:11px;background:#ffff00;"></div>
<div style="left:314px;top:242px;width:7px;height:11px;background:#ffff00;"></div>
<div style="left:321px;top:242px;width:105px;height:11px;background:#ffff00;"></div>
<div class="m" style="left:299px;top:243px;"><span style="color:#ff0000">je</span> <span style="color:#000">untitled.40793D</span></div>
<div class="m" style="left:2px;top:254px;"><span style="color:#808080">0000000000407934</span></div>
<div class="m" style="left:152px;top:254px;"><span style="color:#000">31C0</span></div>
<div class="m" style="left:299px;top:254px;"><span style="color:#000">xor</span> <span style="color:#108010">eax</span><span style="color:#000">,</span><span style="color:#108010">eax</span></div>
<div class="m" style="left:578px;top:254px;"><span style="color:#aa5500">eax:"123456"</span></div>
<div class="m" style="left:2px;top:265px;"><span style="color:#808080">0000000000407936</span></div>
<div class="m" style="left:152px;top:265px;"><span style="color:#000">48:83C4 38</span></div>
<div class="m" style="left:299px;top:265px;"><span style="color:#000">add</span> <span style="color:#108010">rsp</span><span style="color:#000">,</span><span style="color:#828200">38</span></div>
<div class="m" style="left:2px;top:276px;"><span style="color:#808080">000000000040793A</span></div>
<div class="m" style="left:152px;top:276px;"><span style="color:#000">5B</span></div>
<div class="m" style="left:299px;top:276px;"><span style="color:#3010ff">pop</span> <span style="color:#108010">rbx</span></div>
<div class="m" style="left:2px;top:287px;"><span style="color:#808080">000000000040793B</span></div>
<div class="m" style="left:152px;top:287px;"><span style="color:#000">5E</span></div>
<div class="m" style="left:299px;top:287px;"><span style="color:#3010ff">pop</span> <span style="color:#108010">rsi</span></div>
<div class="m" style="left:578px;top:287px;"><span style="color:#aa5500">rsi:"123456"</span></div>
<div class="m" style="left:2px;top:298px;"><span style="color:#808080">000000000040793C</span></div>
<div class="m" style="left:152px;top:298px;"><span style="color:#000">C3</span></div>
<div style="left:300px;top:297px;width:21px;height:11px;background:#00ffff;"></div>
<div class="m" style="left:299px;top:298px;"><span style="color:#000">ret</span></div>
<div class="m" style="left:2px;top:309px;"><span style="color:#808080">000000000040793D</span></div>
<div class="m" style="left:152px;top:309px;"><span style="color:#000">48:8D0D 00170000</span></div>
<div style="left:454px;top:308px;width:42px;height:11px;background:#ffff00;"></div>
<div class="m" style="left:299px;top:309px;"><span style="color:#000">lea</span> <span style="color:#108010">rcx</span><span style="color:#000">,</span><span style="color:#000080">qword ptr</span> <span style="color:#ff00ff">ds</span><span style="color:#000">:</span><span style="color:#000">[</span><span style="color:#000">409044</span><span style="color:#000">]</span></div>
<div class="m" style="left:578px;top:309px;"><span style="color:#aa5500">0000000000409044:"缓冲区溢出成功！\n"</span></div>
<div class="m" style="left:2px;top:320px;"><span style="color:#808080">0000000000407944</span></div>
<div class="m" style="left:152px;top:320px;"><span style="color:#000">E8 37FFFFFF</span></div>
<div style="left:300px;top:319px;width:28px;height:11px;background:#00ffff;"></div>
<div style="left:335px;top:319px;width:105px;height:11px;background:#ffff00;"></div>
<div class="m" style="left:299px;top:320px;"><span style="color:#000">call</span> <span style="color:#000">untitled.407880</span></div>
<div class="m" style="left:2px;top:331px;"><span style="color:#808080">0000000000407949</span></div>
<div class="m" style="left:152px;top:331px;"><span style="color:#000">EB E9</span></div>
<div style="left:300px;top:330px;width:21px;height:11px;background:#ffff00;"></div>
<div style="left:321px;top:330px;width:7px;height:11px;background:#ffff00;"></div>
<div style="left:328px;top:330px;width:105px;height:11px;background:#ffff00;"></div>
<div class="m" style="left:299px;top:331px;"><span style="color:#000">jmp</span> <span style="color:#000">untitled.407934</span></div>
<div class="m" style="left:2px;top:342px;"><span style="color:#808080">000000000040794B</span></div>
<div class="m" style="left:152px;top:342px;"><span style="color:#000">90</span></div>
<div class="m" style="left:299px;top:342px;"><span style="color:#808080">nop</span></div>
<div class="m" style="left:2px;top:353px;"><span style="color:#808080">000000000040794C</span></div>
<div class="m" style="left:152px;top:353px;"><span style="color:#000">90</span></div>
<div class="m" style="left:299px;top:353px;"><span style="color:#808080">nop</span></div>
<div class="m" style="left:2px;top:364px;"><span style="color:#808080">000000000040794D</span></div>
<div class="m" style="left:152px;top:364px;"><span style="color:#000">90</span></div>
<div class="m" style="left:299px;top:364px;"><span style="color:#808080">nop</span></div>
<div class="m" style="left:2px;top:375px;"><span style="color:#808080">000000000040794E</span></div>
<div class="m" style="left:152px;top:375px;"><span style="color:#000">90</span></div>
<div class="m" style="left:299px;top:375px;"><span style="color:#808080">nop</span></div>
<div class="m" style="left:2px;top:386px;"><span style="color:#808080">000000000040794F</span></div>
<div class="m" style="left:152px;top:386px;"><span style="color:#000">90</span></div>
<div class="m" style="left:299px;top:386px;"><span style="color:#808080">nop</span></div>
<div class="m" style="left:2px;top:397px;"><span style="color:#808080">0000000000407950</span></div>
<div class="m" style="left:152px;top:397px;"><span style="color:#000">56</span></div>
<div class="m" style="left:299px;top:397px;"><span style="color:#3010ff">push</span> <span style="color:#108010">rsi</span></div>
<div class="m" style="left:578px;top:397px;"><span style="color:#aa5500">rsi:"123456"</span></div>
<div class="m" style="left:2px;top:408px;"><span style="color:#808080">0000000000407951</span></div>
<div class="m" style="left:152px;top:408px;"><span style="color:#000">53</span></div>
<div class="m" style="left:299px;top:408px;"><span style="color:#3010ff">push</span> <span style="color:#108010">rbx</span></div>
<div class="m" style="left:2px;top:419px;"><span style="color:#808080">0000000000407952</span></div>
<div class="m" style="left:152px;top:419px;"><span style="color:#000">48:83EC 38</span></div>
<div class="m" style="left:299px;top:419px;"><span style="color:#000">sub</span> <span style="color:#108010">rsp</span><span style="color:#000">,</span><span style="color:#828200">38</span></div>
<div class="m" style="left:2px;top:430px;"><span style="color:#808080">0000000000407956</span></div>
<div class="m" style="left:152px;top:430px;"><span style="color:#000">48:8D4424 58</span></div>
<div style="left:447px;top:429px;width:7px;height:11px;background:#00ffff;"></div>
<div style="left:496px;top:429px;width:7px;height:11px;background:#00ffff;"></div>
<div class="m" style="left:299px;top:430px;"><span style="color:#000">lea</span> <span style="color:#108010">rax</span><span style="color:#000">,</span><span style="color:#000080">qword ptr</span> <span style="color:#ff00ff">ss</span><span style="color:#000">:</span><span style="color:#000">[</span><span style="color:#b03434">rsp</span><span style="color:#f27711">+</span><span style="color:#828200">58</span><span style="color:#000">]</span></div>
<div class="m" style="left:2px;top:441px;"><span style="color:#808080">000000000040795B</span></div>
<div class="m" style="left:152px;top:441px;"><span style="color:#000">48:89CB</span></div>
<div class="m" style="left:299px;top:441px;"><span style="color:#000">mov</span> <span style="color:#108010">rbx</span><span style="color:#000">,</span><span style="color:#108010">rcx</span></div>
<div style="left:119px;top:0px;width:1px;height:449px;background:#808080;"></div>
<div style="left:295px;top:0px;width:1px;height:449px;background:#808080;"></div>
<div style="left:575px;top:0px;width:1px;height:449px;background:#808080;"></div>
</div>
<div style="left:279px;top:89px;width:1px;height:0px;background:#808080;"></div>
<div style="left:7px;top:89px;width:150px;height:465px;overflow:hidden">
<svg style="left:140px;top:2px" width="7" height="7"><circle cx="3.5" cy="3.5" r="3.2" fill="#ff0000"/></svg>
<svg style="left:140px;top:13px" width="7" height="7"><circle cx="3.5" cy="3.5" r="3.2" fill="#808080"/></svg>
<svg style="left:140px;top:24px" width="7" height="7"><circle cx="3.5" cy="3.5" r="3.2" fill="#808080"/></svg>
<svg style="left:140px;top:35px" width="7" height="7"><circle cx="3.5" cy="3.5" r="3.2" fill="#808080"/></svg>
<svg style="left:140px;top:46px" width="7" height="7"><circle cx="3.5" cy="3.5" r="3.2" fill="#808080"/></svg>
<svg style="left:140px;top:57px" width="7" height="7"><circle cx="3.5" cy="3.5" r="3.2" fill="#808080"/></svg>
<svg style="left:140px;top:68px" width="7" height="7"><circle cx="3.5" cy="3.5" r="3.2" fill="#808080"/></svg>
<svg style="left:140px;top:79px" width="7" height="7"><circle cx="3.5" cy="3.5" r="3.2" fill="#808080"/></svg>
<svg style="left:140px;top:90px" width="7" height="7"><circle cx="3.5" cy="3.5" r="3.2" fill="#808080"/></svg>
<svg style="left:140px;top:101px" width="7" height="7"><circle cx="3.5" cy="3.5" r="3.2" fill="#808080"/></svg>
<svg style="left:140px;top:112px" width="7" height="7"><circle cx="3.5" cy="3.5" r="3.2" fill="#808080"/></svg>
<svg style="left:140px;top:123px" width="7" height="7"><circle cx="3.5" cy="3.5" r="3.2" fill="#808080"/></svg>
<svg style="left:140px;top:134px" width="7" height="7"><circle cx="3.5" cy="3.5" r="3.2" fill="#808080"/></svg>
<svg style="left:140px;top:145px" width="7" height="7"><circle cx="3.5" cy="3.5" r="3.2" fill="#808080"/></svg>
<svg style="left:140px;top:156px" width="7" height="7"><circle cx="3.5" cy="3.5" r="3.2" fill="#808080"/></svg>
<svg style="left:140px;top:167px" width="7" height="7"><circle cx="3.5" cy="3.5" r="3.2" fill="#808080"/></svg>
<svg style="left:140px;top:178px" width="7" height="7"><circle cx="3.5" cy="3.5" r="3.2" fill="#808080"/></svg>
<svg style="left:140px;top:189px" width="7" height="7"><circle cx="3.5" cy="3.5" r="3.2" fill="#808080"/></svg>
<svg style="left:140px;top:200px" width="7" height="7"><circle cx="3.5" cy="3.5" r="3.2" fill="#808080"/></svg>
<svg style="left:140px;top:211px" width="7" height="7"><circle cx="3.5" cy="3.5" r="3.2" fill="#808080"/></svg>
<svg style="left:140px;top:222px" width="7" height="7"><circle cx="3.5" cy="3.5" r="3.2" fill="#808080"/></svg>
<svg style="left:140px;top:233px" width="7" height="7"><circle cx="3.5" cy="3.5" r="3.2" fill="#808080"/></svg>
<svg style="left:140px;top:244px" width="7" height="7"><circle cx="3.5" cy="3.5" r="3.2" fill="#808080"/></svg>
<svg style="left:140px;top:255px" width="7" height="7"><circle cx="3.5" cy="3.5" r="3.2" fill="#808080"/></svg>
<svg style="left:140px;top:266px" width="7" height="7"><circle cx="3.5" cy="3.5" r="3.2" fill="#808080"/></svg>
<svg style="left:140px;top:277px" width="7" height="7"><circle cx="3.5" cy="3.5" r="3.2" fill="#808080"/></svg>
<svg style="left:140px;top:288px" width="7" height="7"><circle cx="3.5" cy="3.5" r="3.2" fill="#808080"/></svg>
<svg style="left:140px;top:299px" width="7" height="7"><circle cx="3.5" cy="3.5" r="3.2" fill="#808080"/></svg>
<svg style="left:140px;top:310px" width="7" height="7"><circle cx="3.5" cy="3.5" r="3.2" fill="#808080"/></svg>
<svg style="left:140px;top:321px" width="7" height="7"><circle cx="3.5" cy="3.5" r="3.2" fill="#808080"/></svg>
<svg style="left:140px;top:332px" width="7" height="7"><circle cx="3.5" cy="3.5" r="3.2" fill="#808080"/></svg>
<svg style="left:140px;top:343px" width="7" height="7"><circle cx="3.5" cy="3.5" r="3.2" fill="#808080"/></svg>
<svg style="left:140px;top:354px" width="7" height="7"><circle cx="3.5" cy="3.5" r="3.2" fill="#808080"/></svg>
<svg style="left:140px;top:365px" width="7" height="7"><circle cx="3.5" cy="3.5" r="3.2" fill="#808080"/></svg>
<svg style="left:140px;top:376px" width="7" height="7"><circle cx="3.5" cy="3.5" r="3.2" fill="#808080"/></svg>
<svg style="left:140px;top:387px" width="7" height="7"><circle cx="3.5" cy="3.5" r="3.2" fill="#808080"/></svg>
<svg style="left:140px;top:398px" width="7" height="7"><circle cx="3.5" cy="3.5" r="3.2" fill="#808080"/></svg>
<svg style="left:140px;top:409px" width="7" height="7"><circle cx="3.5" cy="3.5" r="3.2" fill="#808080"/></svg>
<svg style="left:140px;top:420px" width="7" height="7"><circle cx="3.5" cy="3.5" r="3.2" fill="#808080"/></svg>
<svg style="left:140px;top:431px" width="7" height="7"><circle cx="3.5" cy="3.5" r="3.2" fill="#808080"/></svg>
<svg style="left:140px;top:442px" width="7" height="7"><circle cx="3.5" cy="3.5" r="3.2" fill="#808080"/></svg>
</div>
<div style="left:8px;top:320px;width:22px;height:11px;background:#4040ff;"></div>
<div class="m" style="left:8px;top:321px;color:#ffffff;">RIP</div>
<div style="left:30px;top:324px;width:111px;height:2px;background:#2020ff;"></div>
<svg style="left:138px;top:320px" width="10" height="10" viewBox="0 0 10 10"><path d="M2 1 L8 5 L2 9" fill="none" stroke="#2020ff" stroke-width="2"/></svg>
<svg style="left:118px;top:334px" width="32" height="72" viewBox="0 0 32 72"><path d="M28 2.5 L2.5 2.5 L2.5 68.5 L27 68.5" fill="none" stroke="#10b0ff" stroke-width="1" stroke-dasharray="3,2"/><path d="M24 65 L27.5 68.5 L24 72" fill="none" stroke="#10b0ff" stroke-width="1.1"/></svg>
<svg style="left:108px;top:344px" width="42" height="84" viewBox="0 0 42 84"><path d="M38 80.5 L1.5 80.5 L1.5 3.5 L37 3.5" fill="none" stroke="#ffa010" stroke-width="1"/><path d="M34 0 L37.5 3.5 L34 7" fill="none" stroke="#ffa010" stroke-width="1.1"/></svg>
<svg style="left:297px;top:333px" width="8" height="6" viewBox="0 0 8 6"><path d="M1 1.5 L4 4.5 L7 1.5" fill="none" stroke="#ff2020" stroke-width="1.1"/></svg>
<svg style="left:297px;top:421px" width="8" height="6" viewBox="0 0 8 6"><path d="M1 4.5 L4 1.5 L7 4.5" fill="none" stroke="#ff2020" stroke-width="1.1"/></svg>
<div style="left:1132px;top:88px;width:377px;height:519px;background:#f0f0f0;"></div>
<div style="left:1132px;top:88px;width:1px;height:519px;background:#858a92;"></div>
<div style="left:1135px;top:89px;width:374px;height:22px;background:#adadad;"></div>
<div style="left:1136px;top:90px;width:373px;height:20px;background:#e1e1e1;"></div>
<div class="s" style="left:1405px;top:92px">隐藏<span style="font-family:'Liberation Sans';font-size:11px">FPU</span></div>
<div style="left:1134px;top:111px;width:375px;height:364px;background:#858a92;"></div>
<div style="left:1135px;top:112px;width:374px;height:363px;background:#fff8f0;"></div>
<div style="left:1134px;top:475px;width:375px;height:16px;background:#f0f0f0;"></div>
<div style="left:1134px;top:475px;width:1px;height:16px;background:#858a92;"></div>
<div style="left:1151px;top:476px;width:308px;height:14px;background:#cdcdcd;"></div>
<svg style="left:1137px;top:479px" width="9" height="9" viewBox="0 0 9 9"><path d="M5 1 L1.5 4.5 L5 8" fill="none" stroke="#606060" stroke-width="1.6"/></svg>
<div style="left:1135px;top:112px;width:374px;height:363px;overflow:hidden">
<div style="left:50px;top:5px;width:112px;height:12px;background:#ebebeb;"></div>
<div class="r" style="left:6px;top:5px;color:#000">RAX</div>
<div class="r" style="left:49px;top:5px;color:#ff0000">000000000061FE0A</div>
<div class="r" style="left:196px;top:5px;color:#000">"123456"</div>
<div class="r" style="left:6px;top:17px;color:#000">RBX</div>
<div class="r" style="left:49px;top:17px;color:#000">0000000000000002</div>
<div class="r" style="left:6px;top:29px;color:#108010">RCX</div>
<div class="r" style="left:49px;top:29px;color:#ff0000">00000000FFFFFFFF</div>
<div class="r" style="left:6px;top:41px;color:#108010">RDX</div>
<div class="r" style="left:49px;top:41px;color:#ff0000">00007FFEFFD7FA00</div>
<div class="r" style="left:196px;top:41px;color:#000">&lt;msvcrt._iob&gt;</div>
<div class="r" style="left:6px;top:53px;color:#000">RBP</div>
<div class="r" style="left:49px;top:53px;color:#000">0000000000BA1390</div>
<div class="r" style="left:196px;top:53px;color:#000">&amp;"C:\\Users\\Reverse\\Desktop\\untitled.exe"</div>
<div class="r" style="left:6px;top:65px;color:#000">RSP</div>
<div class="r" style="left:49px;top:65px;color:#000">000000000061FDE0</div>
<div class="r" style="left:6px;top:77px;color:#000">RSI</div>
<div class="r" style="left:49px;top:77px;color:#000">000000000061FE0A</div>
<div class="r" style="left:196px;top:77px;color:#000">"123456"</div>
<div class="r" style="left:6px;top:89px;color:#000">RDI</div>
<div class="r" style="left:49px;top:89px;color:#000">0000000000BA13B0</div>
<div class="r" style="left:196px;top:89px;color:#000">&amp;"C:\\Users\\Reverse\\Desktop\\untitled.exe"</div>
<div class="r" style="left:6px;top:113px;color:#108010">R8</div>
<div class="r" style="left:49px;top:113px;color:#000">00007FFEFFD85940</div>
<div class="r" style="left:196px;top:113px;color:#000">&lt;msvcrt.__pioinfo&gt;</div>
<div class="r" style="left:6px;top:125px;color:#108010">R9</div>
<div class="r" style="left:49px;top:125px;color:#ff0000">000000000061FAE8</div>
<div class="r" style="left:196px;top:125px;color:#000">&amp;"PE"</div>
<div class="r" style="left:6px;top:137px;color:#000">R10</div>
<div class="r" style="left:49px;top:137px;color:#ff0000">00007FFF0024CE34</div>
<div class="r" style="left:196px;top:137px;color:#000">ntdll.00007FFF0024CE34</div>
<div class="r" style="left:6px;top:149px;color:#000">R11</div>
<div class="r" style="left:49px;top:149px;color:#ff0000">000000000061FDC0</div>
<div class="r" style="left:6px;top:161px;color:#000">R12</div>
<div class="r" style="left:49px;top:161px;color:#000">0000000000000010</div>
<div class="r" style="left:6px;top:173px;color:#000">R13</div>
<div class="r" style="left:49px;top:173px;color:#000">0000000000000008</div>
<div class="r" style="left:6px;top:185px;color:#000">R14</div>
<div class="r" style="left:49px;top:185px;color:#000">0000000000000000</div>
<div class="r" style="left:6px;top:197px;color:#000">R15</div>
<div class="r" style="left:49px;top:197px;color:#000">0000000000000000</div>
<div class="r" style="left:6px;top:221px;color:#000">RIP</div>
<div class="r" style="left:49px;top:221px;color:#ff0000">000000000040792A</div>
<div class="r" style="left:196px;top:221px;color:#000">untitled.000000000040792A</div>
<div style="left:7px;top:74px;width:21px;height:2px;background:#108010;"></div>
<div class="r" style="left:6px;top:245px">RFLAGS</div>
<div class="r" style="left:69px;top:245px;color:#ff0000">0000000000000204</div>
<div class="r" style="left:6px;top:257px">ZF</div>
<div class="r" style="left:27px;top:257px;color:#000">0</div>
<div style="left:7px;top:266px;width:14px;height:2px;background:#a01010;"></div>
<div class="r" style="left:48px;top:257px">PF</div>
<div class="r" style="left:69px;top:257px;color:#ff0000">1</div>
<div style="left:49px;top:266px;width:14px;height:2px;background:#a01010;"></div>
<div class="r" style="left:90px;top:257px">AF</div>
<div class="r" style="left:111px;top:257px;color:#000">0</div>
<div style="left:91px;top:266px;width:14px;height:2px;background:#a01010;"></div>
<div class="r" style="left:6px;top:269px">OF</div>
<div class="r" style="left:27px;top:269px;color:#000">0</div>
<div style="left:7px;top:278px;width:14px;height:2px;background:#a01010;"></div>
<div class="r" style="left:48px;top:269px">SF</div>
<div class="r" style="left:69px;top:269px;color:#000">0</div>
<div style="left:49px;top:278px;width:14px;height:2px;background:#a01010;"></div>
<div class="r" style="left:90px;top:269px">DF</div>
<div class="r" style="left:111px;top:269px;color:#000">0</div>
<div class="r" style="left:6px;top:281px">CF</div>
<div class="r" style="left:27px;top:281px;color:#000">0</div>
<div style="left:7px;top:290px;width:14px;height:2px;background:#a01010;"></div>
<div class="r" style="left:48px;top:281px">TF</div>
<div class="r" style="left:69px;top:281px;color:#000">0</div>
<div class="r" style="left:90px;top:281px">IF</div>
<div class="r" style="left:111px;top:281px;color:#000">1</div>
<div class="r" style="left:6px;top:305px">LastError  00000000 (ERROR_SUCCESS)</div>
<div class="r" style="left:6px;top:317px">LastStatus C0000034 (STATUS_OBJECT_NAME_NOT_FOUND)</div>
<div class="r" style="left:6px;top:341px">GS 002B  FS 0053</div>
<div class="r" style="left:6px;top:353px">ES 002B  DS 002B</div>
</div>
<div style="left:1134px;top:491px;width:375px;height:2px;background:#f0f0f0;"></div>
<div style="left:1134px;top:493px;width:375px;height:20px;background:#adadad;"></div>
<div style="left:1135px;top:494px;width:374px;height:18px;background:#e1e1e1;"></div>
<div class="s" style="left:1137px;top:496px">默认<span style="font-family:'Liberation Mono';font-size:10px"> (x64 fastcall)</span></div>
<div style="left:1134px;top:512px;width:375px;height:94px;background:#858a92;"></div>
<div style="left:1135px;top:513px;width:374px;height:92px;background:#fff8f0;"></div>
<div style="left:1135px;top:514px;width:374px;height:11px;background:#c0c0c0;"></div>
<div class="m" style="left:1138px;top:515px;color:#000;">1: rcx 00000000FFFFFFFF</div>
<div class="m" style="left:1138px;top:526px;color:#000;">2: rdx 00007FFEFFD7FA00 &lt;msvcrt._iob&gt;</div>
<div class="m" style="left:1138px;top:537px;color:#000;">3: r8 00007FFEFFD85940 &lt;msvcrt.__pioinfo&gt;</div>
<div class="m" style="left:1138px;top:548px;color:#000;">4: r9 000000000061FAE8 &amp;"PE"</div>
<div class="m" style="left:1138px;top:559px;color:#000;">5: [rsp+28] 3635343332310026</div>
<div style="left:6px;top:555px;width:1127px;height:1px;background:#f0f0f0;"></div>
<div style="left:6px;top:556px;width:1127px;height:50px;background:#858a92;"></div>
<div style="left:7px;top:557px;width:1125px;height:48px;background:#fff8f0;"></div>
<div class="m" style="left:10px;top:558px;color:#000;">dword ptr ss:[rsp+2C]=[000000000061FE0C "3456"]=36353433</div>
<div class="m" style="left:10px;top:591px;color:#000;">.text:000000000040792A untitled.exe:$792A #6D2A</div>
<div style="left:6px;top:606px;width:1041px;height:25px;background:#f0f0f0;"></div>
<div style="left:6px;top:607px;width:81px;height:24px;background:#ffffff;"></div>
<div class="s" style="left:38px;top:613px">内存<span style="font-family:'Liberation Mono';font-size:10px"> 1</span></div>
<svg style="left:18px;top:611px" width="16" height="15" viewBox="0 0 16 15"><rect x="0" y="3" width="5" height="8" rx="1" fill="#f2b818" stroke="#b08010" stroke-width="0.6"/><rect x="1" y="4.5" width="3" height="3" fill="#6aa0d8"/><rect x="5" y="1" width="11" height="10" rx="1.5" fill="#e4e4e4" stroke="#a0a0a0" stroke-width="0.6"/><g stroke="#b8b8b8" stroke-width="0.8"><path d="M8 2 L8 10 M11 2 L11 10 M14 2 L14 10"/></g><circle cx="2.5" cy="12.5" r="2" fill="#333"/><circle cx="12" cy="12.5" r="2" fill="#333"/></svg>
<div style="left:87px;top:609px;width:79px;height:1px;background:#dcdcdc;"></div>
<div style="left:87px;top:609px;width:1px;height:22px;background:#d9d9d9;"></div>
<div class="s" style="left:118px;top:613px">内存<span style="font-family:'Liberation Mono';font-size:10px"> 2</span></div>
<svg style="left:98px;top:611px" width="16" height="15" viewBox="0 0 16 15"><rect x="0" y="3" width="5" height="8" rx="1" fill="#f2b818" stroke="#b08010" stroke-width="0.6"/><rect x="1" y="4.5" width="3" height="3" fill="#6aa0d8"/><rect x="5" y="1" width="11" height="10" rx="1.5" fill="#e4e4e4" stroke="#a0a0a0" stroke-width="0.6"/><g stroke="#b8b8b8" stroke-width="0.8"><path d="M8 2 L8 10 M11 2 L11 10 M14 2 L14 10"/></g><circle cx="2.5" cy="12.5" r="2" fill="#333"/><circle cx="12" cy="12.5" r="2" fill="#333"/></svg>
<div style="left:166px;top:609px;width:79px;height:1px;background:#dcdcdc;"></div>
<div style="left:166px;top:609px;width:1px;height:22px;background:#d9d9d9;"></div>
<div class="s" style="left:198px;top:613px">内存<span style="font-family:'Liberation Mono';font-size:10px"> 3</span></div>
<svg style="left:178px;top:611px" width="16" height="15" viewBox="0 0 16 15"><rect x="0" y="3" width="5" height="8" rx="1" fill="#f2b818" stroke="#b08010" stroke-width="0.6"/><rect x="1" y="4.5" width="3" height="3" fill="#6aa0d8"/><rect x="5" y="1" width="11" height="10" rx="1.5" fill="#e4e4e4" stroke="#a0a0a0" stroke-width="0.6"/><g stroke="#b8b8b8" stroke-width="0.8"><path d="M8 2 L8 10 M11 2 L11 10 M14 2 L14 10"/></g><circle cx="2.5" cy="12.5" r="2" fill="#333"/><circle cx="12" cy="12.5" r="2" fill="#333"/></svg>
<div style="left:245px;top:609px;width:80px;height:1px;background:#dcdcdc;"></div>
<div style="left:245px;top:609px;width:1px;height:22px;background:#d9d9d9;"></div>
<div class="s" style="left:278px;top:613px">内存<span style="font-family:'Liberation Mono';font-size:10px"> 4</span></div>
<svg style="left:258px;top:611px" width="16" height="15" viewBox="0 0 16 15"><rect x="0" y="3" width="5" height="8" rx="1" fill="#f2b818" stroke="#b08010" stroke-width="0.6"/><rect x="1" y="4.5" width="3" height="3" fill="#6aa0d8"/><rect x="5" y="1" width="11" height="10" rx="1.5" fill="#e4e4e4" stroke="#a0a0a0" stroke-width="0.6"/><g stroke="#b8b8b8" stroke-width="0.8"><path d="M8 2 L8 10 M11 2 L11 10 M14 2 L14 10"/></g><circle cx="2.5" cy="12.5" r="2" fill="#333"/><circle cx="12" cy="12.5" r="2" fill="#333"/></svg>
<div style="left:325px;top:609px;width:81px;height:1px;background:#dcdcdc;"></div>
<div style="left:325px;top:609px;width:1px;height:22px;background:#d9d9d9;"></div>
<div class="s" style="left:358px;top:613px">内存<span style="font-family:'Liberation Mono';font-size:10px"> 5</span></div>
<svg style="left:338px;top:611px" width="16" height="15" viewBox="0 0 16 15"><rect x="0" y="3" width="5" height="8" rx="1" fill="#f2b818" stroke="#b08010" stroke-width="0.6"/><rect x="1" y="4.5" width="3" height="3" fill="#6aa0d8"/><rect x="5" y="1" width="11" height="10" rx="1.5" fill="#e4e4e4" stroke="#a0a0a0" stroke-width="0.6"/><g stroke="#b8b8b8" stroke-width="0.8"><path d="M8 2 L8 10 M11 2 L11 10 M14 2 L14 10"/></g><circle cx="2.5" cy="12.5" r="2" fill="#333"/><circle cx="12" cy="12.5" r="2" fill="#333"/></svg>
<div style="left:406px;top:609px;width:79px;height:1px;background:#dcdcdc;"></div>
<div style="left:406px;top:609px;width:1px;height:22px;background:#d9d9d9;"></div>
<div class="s" style="left:437px;top:613px">监视<span style="font-family:'Liberation Mono';font-size:10px"> 1</span></div>
<svg style="left:417px;top:611px" width="15" height="15" viewBox="0 0 15 15"><circle cx="7.5" cy="8" r="6.5" fill="#d89a50" stroke="#9a6020" stroke-width="0.6"/><ellipse cx="7.5" cy="10" rx="4" ry="3" fill="#f8e0b8"/><circle cx="5" cy="7" r="1" fill="#222"/><circle cx="10" cy="7" r="1" fill="#222"/><path d="M1 3 L3 0 L5 3 M10 3 L12 0 L14 3" fill="#9a6020"/></svg>
<div style="left:485px;top:609px;width:92px;height:1px;background:#dcdcdc;"></div>
<div style="left:485px;top:609px;width:1px;height:22px;background:#d9d9d9;"></div>
<div class="s" style="left:517px;top:613px">局部变量<span style="font-family:'Liberation Mono';font-size:10px"></span></div>
<div style="left:497px;top:612px;font-family:'Liberation Serif';font-size:11px;line-height:14px;color:#333">[<i>x</i>=]</div>
<div style="left:577px;top:609px;width:79px;height:1px;background:#dcdcdc;"></div>
<div style="left:577px;top:609px;width:1px;height:22px;background:#d9d9d9;"></div>
<div class="s" style="left:610px;top:613px">结构体<span style="font-family:'Liberation Mono';font-size:10px"></span></div>
<svg style="left:592px;top:610px" width="14" height="17" viewBox="0 0 14 17"><path d="M3 16 L9 5 Q11 1 8 1 Q5 1 4.5 4" fill="none" stroke="#e03030" stroke-width="2.6"/><path d="M4.5 13 L6 10.5 M6.5 9.5 L8 7" stroke="#fff" stroke-width="1.4"/></svg>
<div style="left:656px;top:609px;width:1px;height:22px;background:#d9d9d9;"></div>
<div style="left:6px;top:631px;width:1040px;height:166px;background:#858a92;"></div>
<div style="left:7px;top:632px;width:1038px;height:165px;background:#fff8f0;"></div>
<div style="left:7px;top:632px;width:1021px;height:14px;background:#c0c0c0;"></div>
<div style="left:7px;top:644px;width:1021px;height:2px;background:#8a8a8a;"></div>
<div style="left:126px;top:632px;width:2px;height:14px;background:#8a8a8a;"></div>
<div style="left:463px;top:632px;width:2px;height:14px;background:#8a8a8a;"></div>
<div style="left:583px;top:632px;width:2px;height:14px;background:#8a8a8a;"></div>
<div style="left:1026px;top:632px;width:2px;height:14px;background:#8a8a8a;"></div>
<div class="s" style="left:11px;top:634px;font-size:11px;line-height:12px">地址</div>
<div class="s" style="left:130px;top:633px;font-size:12px;line-height:13px">十六进制</div>
<div class="m" style="left:467px;top:635px;color:#000;">ASCII</div>
<div style="left:1028px;top:632px;width:17px;height:165px;background:#f0f0f0;"></div>
<svg style="left:1032px;top:638px" width="9" height="9" viewBox="0 0 9 9"><path d="M1 5 L4.5 1.5 L8 5" fill="none" stroke="#606060" stroke-width="1.6"/></svg>
<div style="left:126px;top:646px;width:1px;height:151px;background:#808080;"></div>
<div style="left:463px;top:646px;width:1px;height:151px;background:#808080;"></div>
<div style="left:583px;top:646px;width:1px;height:151px;background:#808080;"></div>
<div style="left:211px;top:646px;width:1px;height:151px;background:#9a9a9a;"></div>
<div style="left:295px;top:646px;width:1px;height:151px;background:#9a9a9a;"></div>
<div style="left:379px;top:646px;width:1px;height:151px;background:#9a9a9a;"></div>
<div style="left:127px;top:647px;width:126px;height:11px;background:#c0c0c0;"></div>
<div style="left:468px;top:647px;width:42px;height:11px;background:#c0c0c0;"></div>
<div class="m" style="left:11px;top:648px;color:#000;">000000000061FE0A</div>
<div class="m" style="left:131px;top:648px;"><span style="color:#800080">31</span> <span style="color:#800080">32</span> <span style="color:#800080">33</span> <span style="color:#800080">34</span> <span style="color:#800080">35</span> <span style="color:#800080">36</span> <span style="color:#008000">00</span> <span style="color:#000">13</span> <span style="color:#000">BA</span> <span style="color:#008000">00</span> <span style="color:#008000">00</span> <span style="color:#008000">00</span> <span style="color:#008000">00</span> <span style="color:#008000">00</span> <span style="color:#000">08</span> <span style="color:#008000">00</span> </div>
<div class="m" style="left:467px;top:648px;"><span style="color:#800080">1</span><span style="color:#800080">2</span><span style="color:#800080">3</span><span style="color:#800080">4</span><span style="color:#800080">5</span><span style="color:#800080">6</span><span style="color:#008000">.</span><span style="color:#000">.</span><span style="color:#000">°</span><span style="color:#008000">.</span><span style="color:#008000">.</span><span style="color:#008000">.</span><span style="color:#008000">.</span><span style="color:#008000">.</span><span style="color:#000">.</span><span style="color:#008000">.</span></div>
<div class="m" style="left:11px;top:659px;color:#000;">000000000061FE1A</div>
<div class="m" style="left:131px;top:659px;"><span style="color:#008000">00</span> <span style="color:#008000">00</span> <span style="color:#008000">00</span> <span style="color:#008000">00</span> <span style="color:#008000">00</span> <span style="color:#008000">00</span> <span style="color:#800080">26</span> <span style="color:#008000">00</span> <span style="color:#008000">00</span> <span style="color:#008000">00</span> <span style="color:#008000">00</span> <span style="color:#008000">00</span> <span style="color:#008000">00</span> <span style="color:#008000">00</span> <span style="color:#000">C7</span> <span style="color:#000">13</span> </div>
<div class="m" style="left:467px;top:659px;"><span style="color:#008000">.</span><span style="color:#008000">.</span><span style="color:#008000">.</span><span style="color:#008000">.</span><span style="color:#008000">.</span><span style="color:#008000">.</span><span style="color:#800080">&amp;</span><span style="color:#008000">.</span><span style="color:#008000">.</span><span style="color:#008000">.</span><span style="color:#008000">.</span><span style="color:#008000">.</span><span style="color:#008000">.</span><span style="color:#008000">.</span><span style="color:#000">Ç</span><span style="color:#000">.</span></div>
<div class="m" style="left:11px;top:670px;color:#000;">000000000061FE2A</div>
<div class="m" style="left:131px;top:670px;"><span style="color:#800080">40</span> <span style="color:#008000">00</span> <span style="color:#008000">00</span> <span style="color:#008000">00</span> <span style="color:#008000">00</span> <span style="color:#008000">00</span> <span style="color:#008000">00</span> <span style="color:#008000">00</span> <span style="color:#008000">00</span> <span style="color:#008000">00</span> <span style="color:#008000">00</span> <span style="color:#008000">00</span> <span style="color:#008000">00</span> <span style="color:#008000">00</span> <span style="color:#800080">26</span> <span style="color:#008000">00</span> </div>
<div class="m" style="left:467px;top:670px;"><span style="color:#800080">@</span><span style="color:#008000">.</span><span style="color:#008000">.</span><span style="color:#008000">.</span><span style="color:#008000">.</span><span style="color:#008000">.</span><span style="color:#008000">.</span><span style="color:#008000">.</span><span style="color:#008000">.</span><span style="color:#008000">.</span><span style="color:#008000">.</span><span style="color:#008000">.</span><span style="color:#008000">.</span><span style="color:#008000">.</span><span style="color:#800080">&amp;</span><span style="color:#008000">.</span></div>
<div class="m" style="left:11px;top:681px;color:#000;">000000000061FE3A</div>
<div class="m" style="left:131px;top:681px;"><span style="color:#008000">00</span> <span style="color:#008000">00</span> <span style="color:#008000">00</span> <span style="color:#008000">00</span> <span style="color:#008000">00</span> <span style="color:#008000">00</span> <span style="color:#800080">70</span> <span style="color:#000">D3</span> <span style="color:#800080">40</span> <span style="color:#008000">00</span> <span style="color:#008000">00</span> <span style="color:#008000">00</span> <span style="color:#008000">00</span> <span style="color:#008000">00</span> <span style="color:#008000">00</span> <span style="color:#008000">00</span> </div>
<div class="m" style="left:467px;top:681px;"><span style="color:#008000">.</span><span style="color:#008000">.</span><span style="color:#008000">.</span><span style="color:#008000">.</span><span style="color:#008000">.</span><span style="color:#008000">.</span><span style="color:#800080">p</span><span style="color:#000">Ó</span><span style="color:#800080">@</span><span style="color:#008000">.</span><span style="color:#008000">.</span><span style="color:#008000">.</span><span style="color:#008000">.</span><span style="color:#008000">.</span><span style="color:#008000">.</span><span style="color:#008000">.</span></div>
<div class="m" style="left:11px;top:692px;color:#000;">000000000061FE4A</div>
<div class="m" style="left:131px;top:692px;"><span style="color:#008000">00</span> <span style="color:#008000">00</span> <span style="color:#008000">00</span> <span style="color:#008000">00</span> <span style="color:#008000">00</span> <span style="color:#008000">00</span> <span style="color:#008000">00</span> <span style="color:#008000">00</span> <span style="color:#008000">00</span> <span style="color:#008000">00</span> <span style="color:#008000">00</span> <span style="color:#008000">00</span> <span style="color:#008000">00</span> <span style="color:#008000">00</span> <span style="color:#008000">00</span> <span style="color:#008000">00</span> </div>
<div class="m" style="left:467px;top:692px;"><span style="color:#008000">.</span><span style="color:#008000">.</span><span style="color:#008000">.</span><span style="color:#008000">.</span><span style="color:#008000">.</span><span style="color:#008000">.</span><span style="color:#008000">.</span><span style="color:#008000">.</span><span style="color:#008000">.</span><span style="color:#008000">.</span><span style="color:#008000">.</span><span style="color:#008000">.</span><span style="color:#008000">.</span><span style="color:#008000">.</span><span style="color:#008000">.</span><span style="color:#008000">.</span></div>
<div class="m" style="left:11px;top:703px;color:#000;">000000000061FE5A</div>
<div class="m" style="left:131px;top:703px;"><span style="color:#008000">00</span> <span style="color:#008000">00</span> <span style="color:#008000">00</span> <span style="color:#008000">00</span> <span style="color:#008000">00</span> <span style="color:#008000">00</span> <span style="color:#008000">00</span> <span style="color:#008000">00</span> <span style="color:#008000">00</span> <span style="color:#008000">00</span> <span style="color:#008000">00</span> <span style="color:#008000">00</span> <span style="color:#008000">00</span> <span style="color:#008000">00</span> <span style="color:#008000">00</span> <span style="color:#008000">00</span> </div>
<div class="m" style="left:467px;top:703px;"><span style="color:#008000">.</span><span style="color:#008000">.</span><span style="color:#008000">.</span><span style="color:#008000">.</span><span style="color:#008000">.</span><span style="color:#008000">.</span><span style="color:#008000">.</span><span style="color:#008000">.</span><span style="color:#008000">.</span><span style="color:#008000">.</span><span style="color:#008000">.</span><span style="color:#008000">.</span><span style="color:#008000">.</span><span style="color:#008000">.</span><span style="color:#008000">.</span><span style="color:#008000">.</span></div>
<div class="m" style="left:11px;top:714px;color:#000;">000000000061FE6A</div>
<div class="m" style="left:131px;top:714px;"><span style="color:#008000">00</span> <span style="color:#008000">00</span> <span style="color:#008000">00</span> <span style="color:#008000">00</span> <span style="color:#008000">00</span> <span style="color:#008000">00</span> <span style="color:#008000">00</span> <span style="color:#008000">00</span> <span style="color:#008000">00</span> <span style="color:#008000">00</span> <span style="color:#008000">00</span> <span style="color:#008000">00</span> <span style="color:#008000">00</span> <span style="color:#008000">00</span> <span style="color:#008000">00</span> <span style="color:#008000">00</span> </div>
<div class="m" style="left:467px;top:714px;"><span style="color:#008000">.</span><span style="color:#008000">.</span><span style="color:#008000">.</span><span style="color:#008000">.</span><span style="color:#008000">.</span><span style="color:#008000">.</span><span style="color:#008000">.</span><span style="color:#008000">.</span><span style="color:#008000">.</span><span style="color:#008000">.</span><span style="color:#008000">.</span><span style="color:#008000">.</span><span style="color:#008000">.</span><span style="color:#008000">.</span><span style="color:#008000">.</span><span style="color:#008000">.</span></div>
<div class="m" style="left:11px;top:725px;color:#000;">000000000061FE7A</div>
<div class="m" style="left:131px;top:725px;"><span style="color:#008000">00</span> <span style="color:#008000">00</span> <span style="color:#008000">00</span> <span style="color:#008000">00</span> <span style="color:#008000">00</span> <span style="color:#008000">00</span> <span style="color:#008000">00</span> <span style="color:#008000">00</span> <span style="color:#008000">00</span> <span style="color:#008000">00</span> <span style="color:#008000">00</span> <span style="color:#008000">00</span> <span style="color:#008000">00</span> <span style="color:#008000">00</span> <span style="color:#008000">00</span> <span style="color:#008000">00</span> </div>
<div class="m" style="left:467px;top:725px;"><span style="color:#008000">.</span><span style="color:#008000">.</span><span style="color:#008000">.</span><span style="color:#008000">.</span><span style="color:#008000">.</span><span style="color:#008000">.</span><span style="color:#008000">.</span><span style="color:#008000">.</span><span style="color:#008000">.</span><span style="color:#008000">.</span><span style="color:#008000">.</span><span style="color:#008000">.</span><span style="color:#008000">.</span><span style="color:#008000">.</span><span style="color:#008000">.</span><span style="color:#008000">.</span></div>
<div class="m" style="left:11px;top:736px;color:#000;">000000000061FE8A</div>
<div class="m" style="left:131px;top:736px;"><span style="color:#008000">00</span> <span style="color:#008000">00</span> <span style="color:#008000">00</span> <span style="color:#008000">00</span> <span style="color:#008000">00</span> <span style="color:#008000">00</span> <span style="color:#008000">00</span> <span style="color:#008000">00</span> <span style="color:#008000">00</span> <span style="color:#008000">00</span> <span style="color:#008000">00</span> <span style="color:#008000">00</span> <span style="color:#008000">00</span> <span style="color:#008000">00</span> <span style="color:#008000">00</span> <span style="color:#008000">00</span> </div>
<div class="m" style="left:467px;top:736px;"><span style="color:#008000">.</span><span style="color:#008000">.</span><span style="color:#008000">.</span><span style="color:#008000">.</span><span style="color:#008000">.</span><span style="color:#008000">.</span><span style="color:#008000">.</span><span style="color:#008000">.</span><span style="color:#008000">.</span><span style="color:#008000">.</span><span style="color:#008000">.</span><span style="color:#008000">.</span><span style="color:#008000">.</span><span style="color:#008000">.</span><span style="color:#008000">.</span><span style="color:#008000">.</span></div>
<div class="m" style="left:11px;top:747px;color:#000;">000000000061FE9A</div>
<div class="m" style="left:131px;top:747px;"><span style="color:#008000">00</span> <span style="color:#008000">00</span> <span style="color:#008000">00</span> <span style="color:#008000">00</span> <span style="color:#008000">00</span> <span style="color:#008000">00</span> <span style="color:#008000">00</span> <span style="color:#008000">00</span> <span style="color:#008000">00</span> <span style="color:#008000">00</span> <span style="color:#008000">00</span> <span style="color:#008000">00</span> <span style="color:#008000">00</span> <span style="color:#008000">00</span> <span style="color:#008000">00</span> <span style="color:#008000">00</span> </div>
<div class="m" style="left:467px;top:747px;"><span style="color:#008000">.</span><span style="color:#008000">.</span><span style="color:#008000">.</span><span style="color:#008000">.</span><span style="color:#008000">.</span><span style="color:#008000">.</span><span style="color:#008000">.</span><span style="color:#008000">.</span><span style="color:#008000">.</span><span style="color:#008000">.</span><span style="color:#008000">.</span><span style="color:#008000">.</span><span style="color:#008000">.</span><span style="color:#008000">.</span><span style="color:#008000">.</span><span style="color:#008000">.</span></div>
<div class="m" style="left:11px;top:758px;color:#000;">000000000061FEAA</div>
<div class="m" style="left:131px;top:758px;"><span style="color:#008000">00</span> <span style="color:#008000">00</span> <span style="color:#008000">00</span> <span style="color:#008000">00</span> <span style="color:#008000">00</span> <span style="color:#008000">00</span> <span style="color:#008000">00</span> <span style="color:#008000">00</span> <span style="color:#008000">00</span> <span style="color:#008000">00</span> <span style="color:#008000">00</span> <span style="color:#008000">00</span> <span style="color:#008000">00</span> <span style="color:#008000">00</span> <span style="color:#008000">00</span> <span style="color:#008000">00</span> </div>
<div class="m" style="left:467px;top:758px;"><span style="color:#008000">.</span><span style="color:#008000">.</span><span style="color:#008000">.</span><span style="color:#008000">.</span><span style="color:#008000">.</span><span style="color:#008000">.</span><span style="color:#008000">.</span><span style="color:#008000">.</span><span style="color:#008000">.</span><span style="color:#008000">.</span><span style="color:#008000">.</span><span style="color:#008000">.</span><span style="color:#008000">.</span><span style="color:#008000">.</span><span style="color:#008000">.</span><span style="color:#008000">.</span></div>
<div class="m" style="left:11px;top:769px;color:#000;">000000000061FEBA</div>
<div class="m" style="left:131px;top:769px;"><span style="color:#008000">00</span> <span style="color:#008000">00</span> <span style="color:#008000">00</span> <span style="color:#008000">00</span> <span style="color:#008000">00</span> <span style="color:#008000">00</span> <span style="color:#008000">00</span> <span style="color:#008000">00</span> <span style="color:#008000">00</span> <span style="color:#008000">00</span> <span style="color:#008000">00</span> <span style="color:#008000">00</span> <span style="color:#008000">00</span> <span style="color:#008000">00</span> <span style="color:#008000">00</span> <span style="color:#008000">00</span> </div>
<div class="m" style="left:467px;top:769px;"><span style="color:#008000">.</span><span style="color:#008000">.</span><span style="color:#008000">.</span><span style="color:#008000">.</span><span style="color:#008000">.</span><span style="color:#008000">.</span><span style="color:#008000">.</span><span style="color:#008000">.</span><span style="color:#008000">.</span><span style="color:#008000">.</span><span style="color:#008000">.</span><span style="color:#008000">.</span><span style="color:#008000">.</span><span style="color:#008000">.</span><span style="color:#008000">.</span><span style="color:#008000">.</span></div>
<div class="m" style="left:11px;top:780px;color:#000;">000000000061FECA</div>
<div class="m" style="left:131px;top:780px;"><span style="color:#008000">00</span> <span style="color:#008000">00</span> <span style="color:#008000">00</span> <span style="color:#008000">00</span> <span style="color:#008000">00</span> <span style="color:#008000">00</span> <span style="color:#008000">00</span> <span style="color:#008000">00</span> <span style="color:#008000">00</span> <span style="color:#008000">00</span> <span style="color:#008000">00</span> <span style="color:#008000">00</span> <span style="color:#008000">00</span> <span style="color:#008000">00</span> <span style="color:#008000">00</span> <span style="color:#008000">00</span> </div>
<div class="m" style="left:467px;top:780px;"><span style="color:#008000">.</span><span style="color:#008000">.</span><span style="color:#008000">.</span><span style="color:#008000">.</span><span style="color:#008000">.</span><span style="color:#008000">.</span><span style="color:#008000">.</span><span style="color:#008000">.</span><span style="color:#008000">.</span><span style="color:#008000">.</span><span style="color:#008000">.</span><span style="color:#008000">.</span><span style="color:#008000">.</span><span style="color:#008000">.</span><span style="color:#008000">.</span><span style="color:#008000">.</span></div>
<div class="m" style="left:11px;top:791px;color:#000;">000000000061FEDA</div>
<div class="m" style="left:131px;top:791px;"><span style="color:#008000">00</span> <span style="color:#008000">00</span> <span style="color:#008000">00</span> <span style="color:#008000">00</span> <span style="color:#008000">00</span> <span style="color:#008000">00</span> <span style="color:#008000">00</span> <span style="color:#008000">00</span> <span style="color:#008000">00</span> <span style="color:#008000">00</span> <span style="color:#008000">00</span> <span style="color:#008000">00</span> <span style="color:#008000">00</span> <span style="color:#008000">00</span> <span style="color:#008000">00</span> <span style="color:#008000">00</span> </div>
<div class="m" style="left:467px;top:791px;"><span style="color:#008000">.</span><span style="color:#008000">.</span><span style="color:#008000">.</span><span style="color:#008000">.</span><span style="color:#008000">.</span><span style="color:#008000">.</span><span style="color:#008000">.</span><span style="color:#008000">.</span><span style="color:#008000">.</span><span style="color:#008000">.</span><span style="color:#008000">.</span><span style="color:#008000">.</span><span style="color:#008000">.</span><span style="color:#008000">.</span><span style="color:#008000">.</span><span style="color:#008000">.</span></div>
<div style="left:1046px;top:606px;width:463px;height:191px;background:#f0f0f0;"></div>
<div style="left:1047px;top:607px;width:462px;height:190px;background:#858a92;"></div>
<div style="left:1048px;top:608px;width:461px;height:189px;background:#fff8f0;"></div>
<div style="left:1048px;top:674px;width:461px;height:11px;background:#c0c0c0;"></div>
<div class="m" style="left:1052px;top:609px;color:#808080;">000000000061FDDA</div>
<div class="m" style="left:1171px;top:609px;color:#000;">000A000000000040</div>
<div class="m" style="left:1052px;top:620px;color:#808080;">000000000061FDE2</div>
<div class="m" style="left:1171px;top:620px;color:#000;">0002000000000000</div>
<div class="m" style="left:1052px;top:631px;color:#808080;">000000000061FDEA</div>
<div class="m" style="left:1171px;top:631px;color:#000;">FE0A000000000000</div>
<div class="m" style="left:1052px;top:642px;color:#808080;">000000000061FDF2</div>
<div class="m" style="left:1171px;top:642px;color:#000;">13B0000000000061</div>
<div class="m" style="left:1052px;top:653px;color:#808080;">000000000061FDFA</div>
<div class="m" style="left:1171px;top:653px;color:#000;">00080000000000BA</div>
<div class="m" style="left:1052px;top:664px;color:#808080;">000000000061FE02</div>
<div class="m" style="left:1171px;top:664px;color:#000;">0026000000000000</div>
<div class="m" style="left:1052px;top:675px;color:#000;">000000000061FE0A</div>
<div class="m" style="left:1171px;top:675px;color:#000;">1300363534333231</div>
<div class="m" style="left:1052px;top:686px;color:#808080;">000000000061FE12</div>
<div class="m" style="left:1171px;top:686px;color:#000;">00080000000000BA</div>
<div class="m" style="left:1052px;top:697px;color:#808080;">000000000061FE1A</div>
<div class="m" style="left:1171px;top:697px;color:#000;">0026000000000000</div>
<div class="m" style="left:1052px;top:708px;color:#808080;">000000000061FE22</div>
<div class="m" style="left:1171px;top:708px;color:#000;">13C7000000000000</div>
<div class="m" style="left:1052px;top:719px;color:#808080;">000000000061FE2A</div>
<div class="m" style="left:1171px;top:719px;color:#000;">0000000000000040</div>
<div class="m" style="left:1052px;top:730px;color:#808080;">000000000061FE32</div>
<div class="m" style="left:1171px;top:730px;color:#000;">0026000000000000</div>
<div class="m" style="left:1052px;top:741px;color:#808080;">000000000061FE3A</div>
<div class="m" style="left:1171px;top:741px;color:#000;">D370000000000000</div>
<div class="m" style="left:1052px;top:752px;color:#808080;">000000000061FE42</div>
<div class="m" style="left:1171px;top:752px;color:#000;">0000000000000040</div>
<div class="m" style="left:1052px;top:763px;color:#808080;">000000000061FE4A</div>
<div class="m" style="left:1171px;top:763px;color:#000;">0000000000000000</div>
<div class="m" style="left:1052px;top:774px;color:#808080;">000000000061FE52</div>
<div class="m" style="left:1171px;top:774px;color:#000;">0000000000000000</div>
<div class="m" style="left:1052px;top:785px;color:#808080;">000000000061FE5A</div>
<div class="m" style="left:1171px;top:785px;color:#000;">0000000000000000</div>
<div style="left:1167px;top:608px;width:1px;height:189px;background:#808080;"></div>
<div style="left:1289px;top:608px;width:1px;height:189px;background:#808080;"></div>
<div style="left:202px;top:697px;width:978px;height:100px;background:#b0b0b0;"></div>
<div style="left:203px;top:697px;width:976px;height:30px;background:#ffffff;"></div>
<div style="left:202px;top:697px;width:978px;height:1px;background:#bdbdbd;"></div>
<svg style="left:211px;top:705px" width="16" height="14" viewBox="0 0 16 14"><rect x="0.5" y="0.5" width="15" height="13" fill="#e8e8e8" stroke="#9098a0"/><rect x="2" y="3" width="7" height="9" fill="#3a8a9a"/><rect x="9" y="3" width="5" height="9" fill="#b0c8d8"/></svg>
<div style="left:232px;top:704px;font-family:'Liberation Sans';font-size:13px;line-height:16px;color:#000;white-space:pre">C:\Users\Reverse\Desktop\untitled.exe</div>
<div style="left:1060px;top:711px;width:11px;height:1px;background:#000;"></div>
<div style="left:1106px;top:706px;width:10px;height:10px;background:transparent;border:1px solid #000"></div>
<svg style="left:1151px;top:705px" width="12" height="12" viewBox="0 0 12 12"><path d="M1 1 L11 11 M11 1 L1 11" stroke="#000" stroke-width="1.1"/></svg>
<div style="left:202px;top:727px;width:961px;height:70px;background:#0c0c0c;"></div>
<div style="left:1163px;top:727px;width:17px;height:70px;background:#f0f0f0;"></div>
<svg style="left:1167px;top:733px" width="9" height="9" viewBox="0 0 9 9"><path d="M1 5 L4.5 1.5 L8 5" fill="none" stroke="#606060" stroke-width="1.6"/></svg>
<div style="left:1164px;top:744px;width:15px;height:17px;background:#cdcdcd;"></div>
<div style="left:203px;top:729px;font-family:'Liberation Mono';font-size:13.33px;line-height:16px;white-space:pre;color:#cccccc">buf: 0061fe0a cookie: 0061fe0c</div>
<div style="left:203px;top:745px;font-family:'Liberation Mono';font-size:13.33px;line-height:16px;white-space:pre;color:#cccccc"><span style="font-family:'Liberation Sans';font-size:16px;letter-spacing:0">两变量内存地址之差</span>=2</div>
<div style="left:203px;top:761px;font-family:'Liberation Mono';font-size:13.33px;line-height:16px;white-space:pre;color:#cccccc">123456</div>
<div style="left:1276px;top:762px;font-family:'Liberation Sans';font-weight:bold;font-size:22px;letter-spacing:0.7px;line-height:24px;color:#ffffff;white-space:pre">www.anquanclub.cn</div>
<svg style="left:0;top:0" width="1509" height="797"><line x1="668.5" y1="140.5" x2="1117.5" y2="126.5" stroke="#0000ff" stroke-width="3.4" stroke-linecap="round"/><path d="M1128.5 126.2 L1115.7 132.6 L1115.3 120.6 Z" fill="#0000ff"/><line x1="1190" y1="127.8" x2="252" y2="630" stroke="#0000ff" stroke-width="3.4" stroke-linecap="round"/><path d="M243 635 L250.5 624.5 L256.5 635.5 Z" fill="#0000ff" stroke="#0000ff" stroke-width="1.2" stroke-linejoin="round"/><line x1="1317" y1="134.2" x2="1265.7" y2="651.8" stroke="#0000ff" stroke-width="3.4" stroke-linecap="round"/><path d="M1264.6 662.7 L1259.9 649.2 L1271.9 650.4 Z" fill="#0000ff"/></svg>
</body></html>
